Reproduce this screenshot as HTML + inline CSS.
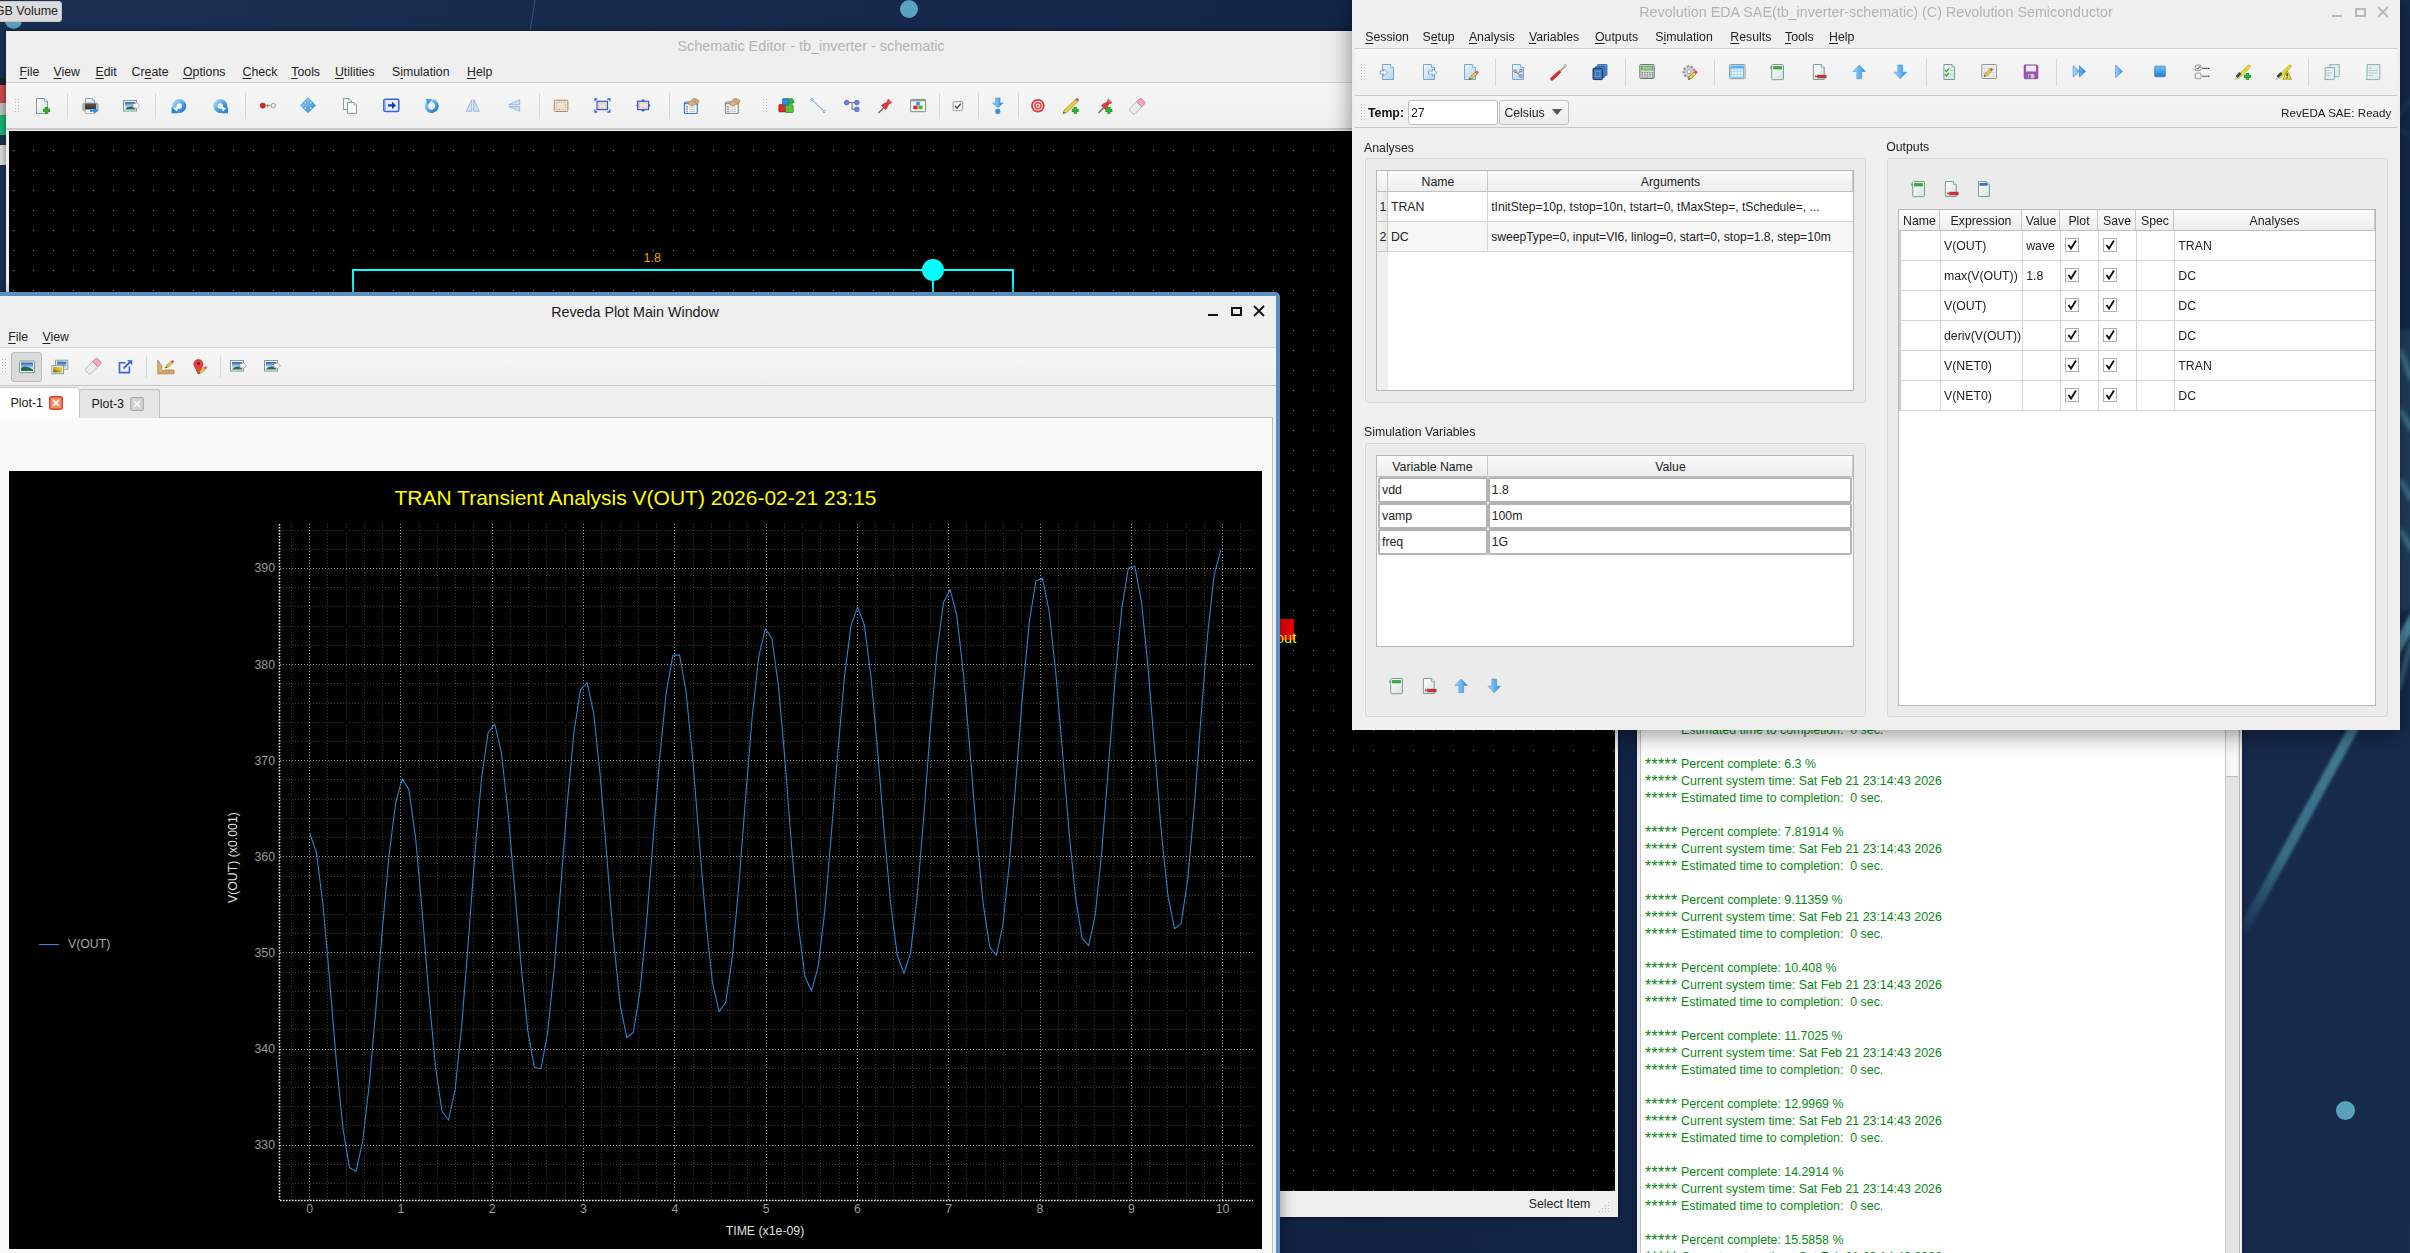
<!DOCTYPE html><html><head><meta charset="utf-8"><style>
html,body{margin:0;padding:0;}
body{width:2410px;height:1253px;overflow:hidden;position:relative;background:#13223d;font-family:"Liberation Sans",sans-serif;}
.a{position:absolute;}
.t{position:absolute;white-space:pre;font-family:"Liberation Sans",sans-serif;}
u{text-decoration:underline;text-underline-offset:2px;text-decoration-thickness:1px;}
</style></head><body><div class="a" style="left:0px;top:0px;width:2410px;height:1253px;background:linear-gradient(100deg,#1b2f52 0%,#15284b 40%,#112243 60%,#182c4e 100%)"></div><svg class="a" style="left:525px;top:0px;" width="12" height="32" viewBox="0 0 12 32"><path d="M10,0 L5,32" stroke="#3a6a8a" stroke-width="1" opacity=".7"/></svg><svg class="a" style="left:2230px;top:560px;" width="180" height="420" viewBox="0 0 180 420"><defs><filter id="bl"><feGaussianBlur stdDeviation="1.8"/></filter><linearGradient id="sg" x1="0" y1="1" x2="0" y2="0"><stop offset="0" stop-color="#3f7d96" stop-opacity="0"/><stop offset=".25" stop-color="#3f7d96" stop-opacity=".8"/><stop offset="1" stop-color="#4a8aa2" stop-opacity="1"/></linearGradient></defs><path d="M8,380 L188,50" stroke="url(#sg)" stroke-width="10" filter="url(#bl)"/></svg><svg class="a" style="left:2380px;top:80px;" width="30" height="640" viewBox="0 0 30 640"><defs><filter id="bl2"><feGaussianBlur stdDeviation="2.2"/></filter></defs><g filter="url(#bl2)" opacity=".75"><path d="M0,60 L30,20" stroke="#4a8aa8" stroke-width="1.2"/><path d="M0,40 L30,55" stroke="#4a8aa8" stroke-width="1"/><rect x="18" y="250" width="14" height="280" fill="#2f6078" opacity=".6"/><path d="M20,270 L32,300 M20,330 L32,350 M20,400 L32,420 M20,450 L32,470" stroke="#5aa8c0" stroke-width="4"/><path d="M32,560 L18,610" stroke="#4a90a8" stroke-width="4"/></g></svg><div class="a" style="left:900px;top:0px;width:18px;height:18px;border-radius:50%;background:#5aa2bb"></div><div class="a" style="left:2336px;top:1101px;width:19px;height:19px;border-radius:50%;background:#5aa2bb"></div><div class="a" style="left:5px;top:12px;width:17px;height:17px;border-radius:50%;background:#5aa2bb"></div><div class="a" style="left:0px;top:78px;width:6px;height:7px;background:#222"></div><div class="a" style="left:0px;top:85px;width:6px;height:18px;background:#c84a4a"></div><div class="a" style="left:0px;top:103px;width:6px;height:12px;background:#bbb"></div><div class="a" style="left:0px;top:115px;width:6px;height:20px;background:#18b070"></div><div class="a" style="left:0px;top:145px;width:6px;height:20px;background:#d8d8d8"></div><div class="a" style="left:6px;top:31px;width:1612px;height:1186px;background:#efefef;box-shadow:0 0 6px rgba(0,0,0,.5)"></div><div class="t" style="left:411.0px;width:800px;text-align:center;top:39.4px;font-size:14.4px;line-height:14.4px;color:#b3b3b3;font-weight:normal;">Schematic Editor - tb_inverter - schematic</div><div class="t" style="left:19.5px;top:65.9px;font-size:12.3px;line-height:12.3px;color:#232323;font-weight:normal;"><u>F</u>ile</div><div class="t" style="left:53.5px;top:65.9px;font-size:12.3px;line-height:12.3px;color:#232323;font-weight:normal;"><u>V</u>iew</div><div class="t" style="left:95.5px;top:65.9px;font-size:12.3px;line-height:12.3px;color:#232323;font-weight:normal;"><u>E</u>dit</div><div class="t" style="left:131.6px;top:65.9px;font-size:12.3px;line-height:12.3px;color:#232323;font-weight:normal;">Cr<u>e</u>ate</div><div class="t" style="left:183.0px;top:65.9px;font-size:12.3px;line-height:12.3px;color:#232323;font-weight:normal;"><u>O</u>ptions</div><div class="t" style="left:242.5px;top:65.9px;font-size:12.3px;line-height:12.3px;color:#232323;font-weight:normal;"><u>C</u>heck</div><div class="t" style="left:291.3px;top:65.9px;font-size:12.3px;line-height:12.3px;color:#232323;font-weight:normal;"><u>T</u>ools</div><div class="t" style="left:334.9px;top:65.9px;font-size:12.3px;line-height:12.3px;color:#232323;font-weight:normal;"><u>U</u>tilities</div><div class="t" style="left:392.1px;top:65.9px;font-size:12.3px;line-height:12.3px;color:#232323;font-weight:normal;">S<u>i</u>mulation</div><div class="t" style="left:467.0px;top:65.9px;font-size:12.3px;line-height:12.3px;color:#232323;font-weight:normal;"><u>H</u>elp</div><div class="a" style="left:6px;top:82px;width:1612px;height:1px;background:#d0d0d0"></div><div class="a" style="left:6px;top:83px;width:1612px;height:46px;background:linear-gradient(#f7f7f7,#efefef)"></div><div class="a" style="left:6px;top:128px;width:1612px;height:2px;background:#c8c8c8"></div><svg class="a" style="left:15px;top:99px;" width="4" height="15" viewBox="0 0 4 15"><rect x="0" y="0" width="1" height="1" fill="#bbb"/><rect x="3" y="0" width="1" height="1" fill="#bbb"/><rect x="0" y="3" width="1" height="1" fill="#bbb"/><rect x="3" y="3" width="1" height="1" fill="#bbb"/><rect x="0" y="6" width="1" height="1" fill="#bbb"/><rect x="3" y="6" width="1" height="1" fill="#bbb"/><rect x="0" y="9" width="1" height="1" fill="#bbb"/><rect x="3" y="9" width="1" height="1" fill="#bbb"/><rect x="0" y="12" width="1" height="1" fill="#bbb"/><rect x="3" y="12" width="1" height="1" fill="#bbb"/></svg><svg class="a" style="left:35px;top:98px;overflow:visible" width="17" height="17" viewBox="0 0 17 17"><defs><linearGradient id="g1" x1="0" y1="0" x2="1" y2="1"><stop offset="0" stop-color="#ffffff"/><stop offset="1" stop-color="#d2e2e2"/></linearGradient></defs><path d="M1.5,0.5 H9.5 L12.5,3.5 V15.5 H1.5 Z" fill="url(#g1)" stroke="#7f9a9a" stroke-width="1" stroke-linejoin="round"/><path d="M9.5,0.5 V3.5 H12.5" fill="#fff" stroke="#7f9a9a" stroke-width=".8"/><path d="M8.21,12.3 H14.989999999999998 M11.6,8.91 V15.690000000000001" stroke="#148a14" stroke-width="3.16" stroke-linecap="butt"/><path d="M8.71,12.3 H14.489999999999998 M11.6,9.41 V15.190000000000001" stroke="#2fb52f" stroke-width="2.16" stroke-linecap="butt"/></svg><svg class="a" style="left:82px;top:98px;overflow:visible" width="17" height="17" viewBox="0 0 17 17"><defs><linearGradient id="g2" x1="0" y1="0" x2="0" y2="1"><stop offset="0" stop-color="#5a5a5a"/><stop offset="1" stop-color="#2a2a2a"/></linearGradient></defs><path d="M3.5,0.5 H10.5 L12.5,2.5 V6.5 H3.5 Z" fill="#eef4f4" stroke="#8aa" stroke-width="1" stroke-linejoin="round"/><path d="M10.5,0.5 V2.5 H12.5" fill="#fff" stroke="#8aa" stroke-width=".8"/><rect x="0.7" y="5" width="15.6" height="8" rx="2" fill="#b8b8b8" stroke="#888" stroke-width=".6"/><rect x="3" y="5.5" width="11" height="6" fill="url(#g2)"/><rect x="3.5" y="11.5" width="9" height="4" fill="#fafafa" stroke="#999" stroke-width=".6"/><path d="M8,12.8 H13.5 M12,10.8 L14.8,12.8 L12,14.8" stroke="#2a8ae8" stroke-width="1.8" fill="none"/></svg><svg class="a" style="left:123px;top:98px;overflow:visible" width="17" height="17" viewBox="0 0 17 17"><defs><linearGradient id="g3" x1="0" y1="0" x2="0" y2="1"><stop offset="0" stop-color="#2a5aa8"/><stop offset="0.5" stop-color="#9ac8f0"/><stop offset="1" stop-color="#eaf4ff"/></linearGradient></defs><rect x="0.5" y="2.5" width="13" height="10.5" fill="#f6f8f8" stroke="#7a9a9a" stroke-width="1"/><rect x="2" y="4" width="10" height="7.5" fill="url(#g3)"/><path d="M2,11.5 Q5,7 12,9.5 V11.5 Z" fill="#2a6a4a"/><path d="M10,5.5 H13 V3.8 L16.3,7.7 L13,11.6 V9.9 H10 Z" fill="#fff" stroke="#889" stroke-width=".7"/></svg><svg class="a" style="left:171px;top:98px;overflow:visible" width="17" height="17" viewBox="0 0 17 17"><defs><linearGradient id="g4" x1="0" y1="0" x2="1" y2="1"><stop offset="0" stop-color="#9ad8fc"/><stop offset="1" stop-color="#1a78d0"/></linearGradient></defs><path d="M3.7,9.7 A4.9,4.9 0 1 1 6.2,12.4" fill="none" stroke="url(#g4)" stroke-width="4.2"/><path d="M0.6,8.8 L7.2,15.3 L0.6,15.3 Z" fill="#1f84d8"/></svg><svg class="a" style="left:212px;top:98px;overflow:visible" width="17" height="17" viewBox="0 0 17 17"><defs><linearGradient id="g5" x1="0" y1="0" x2="1" y2="1"><stop offset="0" stop-color="#9ad8fc"/><stop offset="1" stop-color="#1a78d0"/></linearGradient></defs><path d="M12.9,9.7 A4.9,4.9 0 1 0 10.4,12.4" fill="none" stroke="url(#g5)" stroke-width="4.2"/><path d="M16,8.8 L9.4,15.3 L16,15.3 Z" fill="#1f84d8"/></svg><svg class="a" style="left:260px;top:98px;overflow:visible" width="17" height="17" viewBox="0 0 17 17"><circle cx="2.8" cy="7.6" r="2.6" fill="#d82828" stroke="#a01010" stroke-width=".5"/><path d="M6.2,7.6 L8.4,6.2 V9 Z" fill="#c02020"/><path d="M8.6,7.6 H11" stroke="#999" stroke-width="1"/><circle cx="13.3" cy="7.6" r="2.2" fill="#f4f4f4" stroke="#999" stroke-width="1"/></svg><svg class="a" style="left:300px;top:98px;overflow:visible" width="17" height="17" viewBox="0 0 17 17"><defs><linearGradient id="g6" x1="0" y1="0" x2="1" y2="1"><stop offset="0" stop-color="#a8dcfc"/><stop offset="1" stop-color="#2a8ae0"/></linearGradient></defs><path d="M8,-0.2 L11.6,3.4 H9.4 V5.9 H11.9 V3.7 L15.7,7.3 L11.9,10.9 V8.7 H9.4 V11.2 H11.6 L8,14.7 L4.4,11.2 H6.6 V8.7 H4.1 V10.9 L0.4,7.3 L4.1,3.7 V5.9 H6.6 V3.4 H4.4 Z" fill="url(#g6)" stroke="#2a7ad0" stroke-width=".6"/></svg><svg class="a" style="left:342px;top:98px;overflow:visible" width="17" height="17" viewBox="0 0 17 17"><path d="M1.5,0.5 H7.0 L9.5,3.0 V11.5 H1.5 Z" fill="#f4f6f6" stroke="#8a9a9a" stroke-width="1" stroke-linejoin="round"/><path d="M7.0,0.5 V3.0 H9.5" fill="#fff" stroke="#8a9a9a" stroke-width=".8"/><path d="M5.5,4.5 H12.0 L14.5,7.0 V15.5 H5.5 Z" fill="#f8fafa" stroke="#8a9a9a" stroke-width="1" stroke-linejoin="round"/><path d="M12.0,4.5 V7.0 H14.5" fill="#fff" stroke="#8a9a9a" stroke-width=".8"/></svg><svg class="a" style="left:383px;top:98px;overflow:visible" width="17" height="17" viewBox="0 0 17 17"><rect x="0.8" y="1.3" width="15" height="12.2" rx="1.5" fill="#e6ecfc" stroke="#3a62e0" stroke-width="1.5"/><path d="M2.5,3 V12" stroke="#9ab0f0" stroke-width="1"/><path d="M5,6.2 H9 V3.8 L13,7.4 L9,11 V8.6 H5 Z" fill="#1a3aa8"/></svg><svg class="a" style="left:424px;top:98px;overflow:visible" width="17" height="17" viewBox="0 0 17 17"><defs><linearGradient id="g7" x1="0" y1="0" x2="1" y2="1"><stop offset="0" stop-color="#9ad8fc"/><stop offset="1" stop-color="#1a78d0"/></linearGradient></defs><path d="M4.5,3.8 A5.3,5.3 0 1 0 8.3,2.8" fill="none" stroke="url(#g7)" stroke-width="3.4"/><path d="M2,0.8 L8.5,1.5 L3.5,7 Z" fill="#3a9ae8"/></svg><svg class="a" style="left:465px;top:98px;overflow:visible" width="17" height="17" viewBox="0 0 17 17"><path d="M6.8,1.7 V13.2 H1.3 Z" fill="#cfe0f2" stroke="#96b6d8" stroke-width=".9"/><path d="M8.8,1.7 V13.2 H14.4 Z" fill="#cfe0f2" stroke="#96b6d8" stroke-width=".9"/></svg><svg class="a" style="left:506px;top:98px;overflow:visible" width="17" height="17" viewBox="0 0 17 17"><path d="M13.7,1.7 L2.6,6.8 H13.7 Z" fill="#cfe0f2" stroke="#96b6d8" stroke-width=".9"/><path d="M13.7,13.2 L2.6,8.6 H13.7 Z" fill="#cfe0f2" stroke="#96b6d8" stroke-width=".9"/></svg><svg class="a" style="left:553px;top:98px;overflow:visible" width="17" height="17" viewBox="0 0 17 17"><rect x="1.3" y="2.2" width="13.6" height="11.3" rx="1" fill="#efe4d2" stroke="#a88c6c" stroke-width="1"/><rect x="3.5" y="4.3" width="9.2" height="7.2" fill="none" stroke="#b8a488" stroke-width=".8" stroke-dasharray="1.2,1"/></svg><svg class="a" style="left:594px;top:98px;overflow:visible" width="17" height="17" viewBox="0 0 17 17"><rect x="3" y="3.3" width="10.5" height="8.3" fill="#efe4d2" stroke="#3a5ae0" stroke-width="1.2"/><rect x="4.6" y="4.9" width="7.3" height="5.1" fill="none" stroke="#b8a488" stroke-width=".7" stroke-dasharray="1,1"/><path d="M1,3.3 V1 H3.3 M13.3,1 H15.8 V3.3 M15.8,11.6 V14 H13.3 M3.3,14 H1 V11.6" stroke="#3a5ae0" stroke-width="1.3" fill="none"/></svg><svg class="a" style="left:635px;top:98px;overflow:visible" width="17" height="17" viewBox="0 0 17 17"><rect x="2.6" y="3.3" width="11" height="8.3" fill="#efe4d2" stroke="#3a5ae0" stroke-width="1.2"/><rect x="4.3" y="4.9" width="7.7" height="5.1" fill="none" stroke="#b8a488" stroke-width=".7" stroke-dasharray="1,1"/><path d="M1.1,7.4 L3.2,5.4 V9.4 Z M15.6,7.4 L13.5,5.4 V9.4 Z M8,0.9 L6,2.9 H10 Z M8,14 L6,12 H10 Z" fill="#3a5ae0"/></svg><svg class="a" style="left:683px;top:98px;overflow:visible" width="17" height="17" viewBox="0 0 17 17"><rect x="1.5" y="4" width="12.8" height="11.5" rx="1" fill="#fafcfc" stroke="#3a7ad8" stroke-width="1.2"/><path d="M1.5,5.5 H14.3" stroke="#3a7ad8" stroke-width="1.5"/><rect x="3.3" y="8.2" width="1.4" height="1.4" fill="#2aa02a"/><rect x="3.3" y="10.6" width="1.4" height="1.4" fill="#d03030"/><rect x="3.3" y="13" width="1.4" height="1.4" fill="#3a6ae0"/><path d="M6,9 H12 M6,11.3 H12 M6,13.7 H12" stroke="#b8c0c0" stroke-width=".9"/><path d="M5,5.5 L9,1.5 Q11,0 13,0.8 L16,2.5 L15,5.5 L12.5,6.2 L9,8 Z" fill="#d8b080" stroke="#a07040" stroke-width=".6"/><path d="M9.5,3 L13.5,5 M10.5,1.8 L14.5,3.8" stroke="#b08050" stroke-width=".6"/></svg><svg class="a" style="left:724px;top:98px;overflow:visible" width="17" height="17" viewBox="0 0 17 17"><rect x="1.5" y="4" width="12.8" height="11.5" rx="1" fill="#fafcfc" stroke="#8a9090" stroke-width="1.2"/><path d="M1.5,5.5 H14.3" stroke="#8a9090" stroke-width="1.5"/><rect x="3.3" y="8.2" width="1.4" height="1.4" fill="#2aa02a"/><rect x="3.3" y="10.6" width="1.4" height="1.4" fill="#d03030"/><rect x="3.3" y="13" width="1.4" height="1.4" fill="#3a6ae0"/><path d="M6,9 H12 M6,11.3 H12 M6,13.7 H12" stroke="#b8c0c0" stroke-width=".9"/><path d="M5,5.5 L9,1.5 Q11,0 13,0.8 L16,2.5 L15,5.5 L12.5,6.2 L9,8 Z" fill="#d8b080" stroke="#a07040" stroke-width=".6"/><path d="M9.5,3 L13.5,5 M10.5,1.8 L14.5,3.8" stroke="#b08050" stroke-width=".6"/></svg><svg class="a" style="left:778px;top:98px;overflow:visible" width="17" height="17" viewBox="0 0 17 17"><rect x="0.9" y="6.6" width="8.3" height="7.3" rx=".8" fill="#e02828" stroke="#a01010" stroke-width=".7"/><rect x="4.6" y="0.6" width="6.6" height="6.6" rx=".8" fill="#2a8ae8" stroke="#1a5aa8" stroke-width=".7"/><rect x="7.6" y="7.2" width="7.6" height="7.3" rx=".8" fill="#58c038" stroke="#2a8a1a" stroke-width=".7"/><path d="M9.78,3.4 H16.22 M13,0.17999999999999972 V6.62" stroke="#148a14" stroke-width="3.07" stroke-linecap="butt"/><path d="M10.28,3.4 H15.72 M13,0.6799999999999997 V6.12" stroke="#2fb52f" stroke-width="2.07" stroke-linecap="butt"/></svg><svg class="a" style="left:810px;top:98px;overflow:visible" width="17" height="17" viewBox="0 0 17 17"><path d="M2.6,2.4 L13.4,12.6" stroke="#6a98d0" stroke-width="1"/><circle cx="1.9" cy="1.7" r="1.2" fill="#fff" stroke="#6a98d0" stroke-width=".9"/><circle cx="14.2" cy="13.4" r="1.2" fill="#fff" stroke="#6a98d0" stroke-width=".9"/></svg><svg class="a" style="left:844px;top:98px;overflow:visible" width="17" height="17" viewBox="0 0 17 17"><path d="M2.7,4.6 H12.9 M8,4.6 V11.4 H12.9" stroke="#777" stroke-width="1" fill="none"/><circle cx="2.7" cy="4.6" r="2.3" fill="#6a84ea" stroke="#3a52c0" stroke-width=".7"/><circle cx="12.9" cy="4.6" r="2.3" fill="#6a84ea" stroke="#3a52c0" stroke-width=".7"/><circle cx="12.9" cy="11.4" r="2.3" fill="#6a84ea" stroke="#3a52c0" stroke-width=".7"/></svg><svg class="a" style="left:877px;top:98px;overflow:visible" width="17" height="17" viewBox="0 0 17 17"><path d="M1.5,15 L6.5,10" stroke="#666" stroke-width="1.4"/><path d="M4.5,7.5 L8.5,11.5 L10.5,8.8 L11.5,6.2 L13.8,4.8 L11.2,2.2 L9.8,4.5 L7.2,5.5 Z" fill="#e03838" stroke="#a02020" stroke-width=".6"/><path d="M10.6,1.6 L14.4,5.4" stroke="#e85050" stroke-width="2.2"/></svg><svg class="a" style="left:910px;top:98px;overflow:visible" width="17" height="17" viewBox="0 0 17 17"><rect x="0.6" y="1.4" width="15" height="12.3" rx=".8" fill="#f4f4f4" stroke="#888" stroke-width="1"/><path d="M0.6,2.6 H15.6" stroke="#999" stroke-width="1.4"/><rect x="6.2" y="3.8" width="3.6" height="3.6" fill="#2a9ae8"/><rect x="3.4" y="7.6" width="4.2" height="3.6" fill="#e02828"/><rect x="8.4" y="7.6" width="4.2" height="3.6" fill="#48b838"/></svg><svg class="a" style="left:950px;top:98px;overflow:visible" width="17" height="17" viewBox="0 0 17 17"><rect x="3.1" y="3.6" width="9.6" height="9.1" rx="1.2" fill="#fafafa" stroke="#999" stroke-width="1"/><path d="M5,8 L7,10.2 L10.8,5.6" stroke="#444" stroke-width="1.4" fill="none"/></svg><svg class="a" style="left:990px;top:98px;overflow:visible" width="17" height="17" viewBox="0 0 17 17"><defs><linearGradient id="g8" x1="0" y1="0" x2="1" y2="0"><stop offset="0" stop-color="#a8dcfc"/><stop offset="1" stop-color="#2a8ae0"/></linearGradient></defs><path d="M5.6,0 H10.1 V5 H13.3 L7.85,9.7 L2.3,5 H5.6 Z" fill="url(#g8)" stroke="#3a8ad8" stroke-width=".5"/><circle cx="7.8" cy="13.4" r="2.4" fill="#2a9ae8" stroke="#1a6ac0" stroke-width=".5"/></svg><svg class="a" style="left:1030px;top:98px;overflow:visible" width="17" height="17" viewBox="0 0 17 17"><circle cx="7.9" cy="7.8" r="6.8" fill="#e03838"/><circle cx="7.9" cy="7.8" r="5" fill="#fbe0e0"/><circle cx="7.9" cy="7.8" r="3.8" fill="#e84848"/><circle cx="7.9" cy="7.8" r="2.3" fill="#fbe8e8"/><circle cx="7.9" cy="7.8" r="1.1" fill="#e03838"/></svg><svg class="a" style="left:1063px;top:98px;overflow:visible" width="17" height="17" viewBox="0 0 17 17"><path d="M0.20,15.50 L3.54,14.64 L14.68,3.86 L12.32,1.42 L1.18,12.19 Z" fill="#e8cc3a" stroke="#8a7a30" stroke-width=".6"/><path d="M14.68,3.86 L16.48,2.12 L14.12,-0.32 L12.32,1.42 Z" fill="#e05060"/><path d="M0.20,15.50 L2.00,15.06 L0.70,13.72 Z" fill="#222"/><path d="M8.809999999999999,12.4 H15.59 M12.2,9.010000000000002 V15.79" stroke="#148a14" stroke-width="3.16" stroke-linecap="butt"/><path d="M9.309999999999999,12.4 H15.09 M12.2,9.510000000000002 V15.29" stroke="#2fb52f" stroke-width="2.16" stroke-linecap="butt"/></svg><svg class="a" style="left:1097px;top:98px;overflow:visible" width="17" height="17" viewBox="0 0 17 17"><path d="M1.5,15 L6.5,10" stroke="#666" stroke-width="1.4"/><path d="M4.5,7.5 L8.5,11.5 L10.5,8.8 L11.5,6.2 L13.8,4.8 L11.2,2.2 L9.8,4.5 L7.2,5.5 Z" fill="#e03838" stroke="#a02020" stroke-width=".6"/><path d="M10.6,1.6 L14.4,5.4" stroke="#e85050" stroke-width="2.2"/><path d="M8.510000000000002,12.4 H15.29 M11.9,9.010000000000002 V15.79" stroke="#148a14" stroke-width="3.16" stroke-linecap="butt"/><path d="M9.010000000000002,12.4 H14.79 M11.9,9.510000000000002 V15.29" stroke="#2fb52f" stroke-width="2.16" stroke-linecap="butt"/></svg><svg class="a" style="left:1129px;top:98px;overflow:visible" width="17" height="17" viewBox="0 0 17 17"><path d="M0.8,10.6 L7.6,3.6 L12.8,8.8 L6,15.6 Q4.8,16.4 3.6,15.6 L0.8,12.8 Q0,11.6 0.8,10.6 Z" fill="#ececec" stroke="#a8a8a8" stroke-width=".8"/><path d="M7.6,3.6 L10.6,0.8 Q11.6,0 12.6,0.8 L15.6,3.8 Q16.4,4.8 15.6,5.8 L12.8,8.8 Z" fill="#f2a4ba" stroke="#c07a90" stroke-width=".8"/></svg><div class="a" style="left:67px;top:93px;width:1px;height:26px;background:#d8d8d8"></div><div class="a" style="left:155px;top:93px;width:1px;height:26px;background:#d8d8d8"></div><div class="a" style="left:245px;top:93px;width:1px;height:26px;background:#d8d8d8"></div><div class="a" style="left:539px;top:93px;width:1px;height:26px;background:#d8d8d8"></div><div class="a" style="left:669px;top:93px;width:1px;height:26px;background:#d8d8d8"></div><div class="a" style="left:939px;top:93px;width:1px;height:26px;background:#d8d8d8"></div><div class="a" style="left:978px;top:93px;width:1px;height:26px;background:#d8d8d8"></div><div class="a" style="left:1018px;top:93px;width:1px;height:26px;background:#d8d8d8"></div><svg class="a" style="left:763px;top:99px;" width="4" height="15" viewBox="0 0 4 15"><rect x="0" y="0" width="1" height="1" fill="#bbb"/><rect x="3" y="0" width="1" height="1" fill="#bbb"/><rect x="0" y="3" width="1" height="1" fill="#bbb"/><rect x="3" y="3" width="1" height="1" fill="#bbb"/><rect x="0" y="6" width="1" height="1" fill="#bbb"/><rect x="3" y="6" width="1" height="1" fill="#bbb"/><rect x="0" y="9" width="1" height="1" fill="#bbb"/><rect x="3" y="9" width="1" height="1" fill="#bbb"/><rect x="0" y="12" width="1" height="1" fill="#bbb"/><rect x="3" y="12" width="1" height="1" fill="#bbb"/></svg><div class="a" style="left:9px;top:131px;width:1606px;height:1060px;background-color:#000;background-image:radial-gradient(circle at 0.5px 0.5px,#8a8a8a 0.7px,transparent 0.8px);background-size:20px 20px;background-position:4px 19px"></div><div class="a" style="left:352px;top:269px;width:662px;height:2px;background:#00ffff"></div><div class="a" style="left:352px;top:269px;width:2px;height:30px;background:#00ffff"></div><div class="a" style="left:1012px;top:269px;width:2px;height:30px;background:#00ffff"></div><div class="a" style="left:932px;top:270px;width:2px;height:30px;background:#00ffff"></div><div class="a" style="left:922px;top:259px;width:22px;height:22px;border-radius:50%;background:#00ffff"></div><div class="t" style="left:643.5px;top:252.4px;font-size:12.5px;line-height:12.5px;color:#f0a000;font-weight:normal;">1.8</div><div class="a" style="left:1280px;top:619px;width:14px;height:21px;background:#e80000"></div><div class="t" style="left:1276.0px;top:631.2px;font-size:14.5px;line-height:14.5px;color:#ffff00;font-weight:normal;">out</div><div class="a" style="left:6px;top:1191px;width:1612px;height:26px;background:#efefef"></div><div class="t" style="left:1390.3px;width:200px;text-align:right;top:1198.0px;font-size:12.3px;line-height:12.3px;color:#222;font-weight:normal;">Select Item</div><svg class="a" style="left:1598px;top:1202px;" width="14" height="12" viewBox="0 0 14 12"><rect x="10" y="0" width="1" height="1" fill="#bbb"/><rect x="7" y="3" width="1" height="1" fill="#bbb"/><rect x="10" y="3" width="1" height="1" fill="#bbb"/><rect x="4" y="6" width="1" height="1" fill="#bbb"/><rect x="7" y="6" width="1" height="1" fill="#bbb"/><rect x="10" y="6" width="1" height="1" fill="#bbb"/><rect x="1" y="9" width="1" height="1" fill="#bbb"/><rect x="4" y="9" width="1" height="1" fill="#bbb"/><rect x="7" y="9" width="1" height="1" fill="#bbb"/><rect x="10" y="9" width="1" height="1" fill="#bbb"/></svg><div class="a" style="left:1637px;top:600px;width:605px;height:653px;background:#f0f0f0;box-shadow:0 0 5px rgba(0,0,0,.4)"></div><div class="a" style="left:1641px;top:600px;width:584px;height:653px;background:#fff"></div><div class="a" style="left:2225px;top:600px;width:14px;height:653px;background:#e4e4e4;border-left:1px solid #c8c8c8;box-sizing:border-box"></div><div class="a" style="left:2239px;top:600px;width:1px;height:653px;background:#b8b8b8"></div><div class="a" style="left:1640px;top:600px;width:1px;height:653px;background:#c4c4c4"></div><div class="a" style="left:2226px;top:700px;width:12px;height:77px;background:linear-gradient(90deg,#f4f4f4,#fafafa);border-bottom:1px solid #c0c0c0;box-sizing:border-box"></div><div class="t" style="left:1645px;top:620.2px;font-size:12.38px;line-height:17px;color:#088a12"><span style="font-size:16px;line-height:0;letter-spacing:0.3px;position:relative;top:2px">*****</span> Percent complete: 3.7111 %
<span style="font-size:16px;line-height:0;letter-spacing:0.3px;position:relative;top:2px">*****</span> Current system time: Sat Feb 21 23:14:43 2026
<span style="font-size:16px;line-height:0;letter-spacing:0.3px;position:relative;top:2px">*****</span> Estimated time to completion:  0 sec.

<span style="font-size:16px;line-height:0;letter-spacing:0.3px;position:relative;top:2px">*****</span> Percent complete: 5.00555 %
<span style="font-size:16px;line-height:0;letter-spacing:0.3px;position:relative;top:2px">*****</span> Current system time: Sat Feb 21 23:14:43 2026
<span style="font-size:16px;line-height:0;letter-spacing:0.3px;position:relative;top:2px">*****</span> Estimated time to completion:  0 sec.

<span style="font-size:16px;line-height:0;letter-spacing:0.3px;position:relative;top:2px">*****</span> Percent complete: 6.3 %
<span style="font-size:16px;line-height:0;letter-spacing:0.3px;position:relative;top:2px">*****</span> Current system time: Sat Feb 21 23:14:43 2026
<span style="font-size:16px;line-height:0;letter-spacing:0.3px;position:relative;top:2px">*****</span> Estimated time to completion:  0 sec.

<span style="font-size:16px;line-height:0;letter-spacing:0.3px;position:relative;top:2px">*****</span> Percent complete: 7.81914 %
<span style="font-size:16px;line-height:0;letter-spacing:0.3px;position:relative;top:2px">*****</span> Current system time: Sat Feb 21 23:14:43 2026
<span style="font-size:16px;line-height:0;letter-spacing:0.3px;position:relative;top:2px">*****</span> Estimated time to completion:  0 sec.

<span style="font-size:16px;line-height:0;letter-spacing:0.3px;position:relative;top:2px">*****</span> Percent complete: 9.11359 %
<span style="font-size:16px;line-height:0;letter-spacing:0.3px;position:relative;top:2px">*****</span> Current system time: Sat Feb 21 23:14:43 2026
<span style="font-size:16px;line-height:0;letter-spacing:0.3px;position:relative;top:2px">*****</span> Estimated time to completion:  0 sec.

<span style="font-size:16px;line-height:0;letter-spacing:0.3px;position:relative;top:2px">*****</span> Percent complete: 10.408 %
<span style="font-size:16px;line-height:0;letter-spacing:0.3px;position:relative;top:2px">*****</span> Current system time: Sat Feb 21 23:14:43 2026
<span style="font-size:16px;line-height:0;letter-spacing:0.3px;position:relative;top:2px">*****</span> Estimated time to completion:  0 sec.

<span style="font-size:16px;line-height:0;letter-spacing:0.3px;position:relative;top:2px">*****</span> Percent complete: 11.7025 %
<span style="font-size:16px;line-height:0;letter-spacing:0.3px;position:relative;top:2px">*****</span> Current system time: Sat Feb 21 23:14:43 2026
<span style="font-size:16px;line-height:0;letter-spacing:0.3px;position:relative;top:2px">*****</span> Estimated time to completion:  0 sec.

<span style="font-size:16px;line-height:0;letter-spacing:0.3px;position:relative;top:2px">*****</span> Percent complete: 12.9969 %
<span style="font-size:16px;line-height:0;letter-spacing:0.3px;position:relative;top:2px">*****</span> Current system time: Sat Feb 21 23:14:43 2026
<span style="font-size:16px;line-height:0;letter-spacing:0.3px;position:relative;top:2px">*****</span> Estimated time to completion:  0 sec.

<span style="font-size:16px;line-height:0;letter-spacing:0.3px;position:relative;top:2px">*****</span> Percent complete: 14.2914 %
<span style="font-size:16px;line-height:0;letter-spacing:0.3px;position:relative;top:2px">*****</span> Current system time: Sat Feb 21 23:14:43 2026
<span style="font-size:16px;line-height:0;letter-spacing:0.3px;position:relative;top:2px">*****</span> Estimated time to completion:  0 sec.

<span style="font-size:16px;line-height:0;letter-spacing:0.3px;position:relative;top:2px">*****</span> Percent complete: 15.5858 %
<span style="font-size:16px;line-height:0;letter-spacing:0.3px;position:relative;top:2px">*****</span> Current system time: Sat Feb 21 23:14:43 2026
<span style="font-size:16px;line-height:0;letter-spacing:0.3px;position:relative;top:2px">*****</span> Estimated time to completion:  0 sec.

<span style="font-size:16px;line-height:0;letter-spacing:0.3px;position:relative;top:2px">*****</span> Percent complete: 16.8803 %
<span style="font-size:16px;line-height:0;letter-spacing:0.3px;position:relative;top:2px">*****</span> Current system time: Sat Feb 21 23:14:43 2026
<span style="font-size:16px;line-height:0;letter-spacing:0.3px;position:relative;top:2px">*****</span> Estimated time to completion:  0 sec.
</div><div class="a" style="left:-4px;top:292px;width:1284px;height:971px;background:#5a8fc0;border-radius:5px 5px 0 0;box-shadow:2px 0 14px rgba(0,0,0,.35)"></div><div class="a" style="left:0px;top:296px;width:1276px;height:961px;background:#efefef"></div><div class="t" style="left:235.0px;width:800px;text-align:center;top:304.6px;font-size:14.3px;line-height:14.3px;color:#1a1a1a;font-weight:normal;">Reveda Plot Main Window</div><div class="a" style="left:1208px;top:314px;width:10px;height:2px;background:#111"></div><div class="a" style="left:1231px;top:307px;width:11px;height:9px;border:2px solid #111;box-sizing:border-box;border-top-width:2px"></div><svg class="a" style="left:1253px;top:305px;" width="12" height="12" viewBox="0 0 12 12"><path d="M1,1 L11,11 M11,1 L1,11" stroke="#111" stroke-width="1.8"/></svg><div class="t" style="left:8.2px;top:331.3px;font-size:12.3px;line-height:12.3px;color:#222;font-weight:normal;"><u>F</u>ile</div><div class="t" style="left:42.5px;top:331.3px;font-size:12.3px;line-height:12.3px;color:#222;font-weight:normal;"><u>V</u>iew</div><div class="a" style="left:0px;top:347px;width:1276px;height:1px;background:#d4d4d4"></div><div class="a" style="left:0px;top:348px;width:1276px;height:37px;background:linear-gradient(#f7f7f7,#efefef)"></div><div class="a" style="left:0px;top:385px;width:1276px;height:1px;background:#c4c4c4"></div><svg class="a" style="left:2px;top:359px;" width="4" height="15" viewBox="0 0 4 15"><rect x="0" y="0" width="1" height="1" fill="#bbb"/><rect x="3" y="0" width="1" height="1" fill="#bbb"/><rect x="0" y="3" width="1" height="1" fill="#bbb"/><rect x="3" y="3" width="1" height="1" fill="#bbb"/><rect x="0" y="6" width="1" height="1" fill="#bbb"/><rect x="3" y="6" width="1" height="1" fill="#bbb"/><rect x="0" y="9" width="1" height="1" fill="#bbb"/><rect x="3" y="9" width="1" height="1" fill="#bbb"/><rect x="0" y="12" width="1" height="1" fill="#bbb"/><rect x="3" y="12" width="1" height="1" fill="#bbb"/></svg><div class="a" style="left:11px;top:352px;width:31px;height:30px;background:#dadada;border:1px solid #bcbcbc;border-radius:3px;box-sizing:border-box"></div><svg class="a" style="left:19px;top:358px;overflow:visible" width="17" height="17" viewBox="0 0 17 17"><defs><linearGradient id="g9" x1="0" y1="0" x2="0" y2="1"><stop offset="0" stop-color="#2a5aa8"/><stop offset="0.55" stop-color="#9ad0f8"/><stop offset="1" stop-color="#f0f8ff"/></linearGradient></defs><rect x="0.5" y="3" width="15" height="11.6" rx=".5" fill="#f4f6f6" stroke="#7a9a9a" stroke-width="1"/><rect x="2" y="4.5" width="12" height="8.6" fill="url(#g9)"/><path d="M2,13.1 V10 Q6,6.5 14,11.5 V13.1 Z" fill="#2a6a4a"/></svg><svg class="a" style="left:52px;top:358px;overflow:visible" width="17" height="17" viewBox="0 0 17 17"><defs><linearGradient id="g10" x1="0" y1="0" x2="0" y2="1"><stop offset="0" stop-color="#2a5aa8"/><stop offset="1" stop-color="#cfe8ff"/></linearGradient></defs><defs><linearGradient id="g11" x1="0" y1="1" x2="1" y2="0"><stop offset="0" stop-color="#604010"/><stop offset="0.5" stop-color="#d8b020"/><stop offset="1" stop-color="#f8e060"/></linearGradient></defs><rect x="3.6" y="2.2" width="12.2" height="9" fill="#f4f6f6" stroke="#7a9a9a" stroke-width=".9"/><rect x="5" y="3.6" width="9.4" height="6.2" fill="url(#g10)"/><rect x="-0.1" y="7.7" width="11.6" height="8.1" fill="#f4f6f6" stroke="#7a9a9a" stroke-width=".9"/><rect x="1.2" y="9" width="9" height="5.5" fill="url(#g11)"/></svg><svg class="a" style="left:85px;top:358px;overflow:visible" width="17" height="17" viewBox="0 0 17 17"><path d="M0.8,10.6 L7.6,3.6 L12.8,8.8 L6,15.6 Q4.8,16.4 3.6,15.6 L0.8,12.8 Q0,11.6 0.8,10.6 Z" fill="#ececec" stroke="#a8a8a8" stroke-width=".8"/><path d="M7.6,3.6 L10.6,0.8 Q11.6,0 12.6,0.8 L15.6,3.8 Q16.4,4.8 15.6,5.8 L12.8,8.8 Z" fill="#f2a4ba" stroke="#c07a90" stroke-width=".8"/></svg><svg class="a" style="left:118px;top:358px;overflow:visible" width="17" height="17" viewBox="0 0 17 17"><path d="M7.5,4.8 H1.5 V14.6 H11.4 V8.5" fill="none" stroke="#3a62e0" stroke-width="1.6"/><path d="M5.5,10.5 L13,3" stroke="#3a62e0" stroke-width="1.8"/><path d="M9.2,2.2 H14.2 V7.2 Z" fill="#3a62e0"/></svg><svg class="a" style="left:158px;top:358px;overflow:visible" width="17" height="17" viewBox="0 0 17 17"><path d="M-0.2,2.2 L-0.2,15.8 H15.9 V12 H4 L4,8.5 Z" fill="#e0b070" stroke="#a06a30" stroke-width=".7"/><path d="M4,12 L4,8.5 L7.5,12 Z" fill="#f6f0e4"/><path d="M2,14.5 V13.5 M5,14.5 V13 M8,14.5 V13.5 M11,14.5 V13 M14,14.5 V13.5" stroke="#8a5a20" stroke-width=".6"/><path d="M7.40,10.00 L10.43,8.88 L14.45,5.27 L12.84,3.48 L8.83,7.10 Z" fill="#e8cc3a" stroke="#8a7a30" stroke-width=".6"/><path d="M14.45,5.27 L16.30,3.59 L14.70,1.81 L12.84,3.48 Z" fill="#e05060"/><path d="M7.40,10.00 L9.03,9.42 L8.15,8.44 Z" fill="#222"/></svg><svg class="a" style="left:192px;top:358px;overflow:visible" width="17" height="17" viewBox="0 0 17 17"><path d="M6.3,15.8 L2.2,8 A4.6,4.6 0 1 1 10.6,8 Z" fill="#e84040" stroke="#b02020" stroke-width=".6"/><circle cx="6.3" cy="5.4" r="1.5" fill="#5a2020"/><path d="M6.50,15.80 L9.55,14.75 L13.49,11.34 L11.92,9.53 L7.99,12.93 Z" fill="#e8cc3a" stroke="#8a7a30" stroke-width=".6"/><path d="M13.49,11.34 L15.38,9.71 L13.82,7.89 L11.92,9.53 Z" fill="#e05060"/><path d="M6.50,15.80 L8.14,15.25 L7.28,14.25 Z" fill="#222"/></svg><svg class="a" style="left:230px;top:358px;overflow:visible" width="17" height="17" viewBox="0 0 17 17"><defs><linearGradient id="g12" x1="0" y1="0" x2="0" y2="1"><stop offset="0" stop-color="#2a5aa8"/><stop offset="0.5" stop-color="#9ac8f0"/><stop offset="1" stop-color="#eaf4ff"/></linearGradient></defs><rect x="0.5" y="2.5" width="13" height="10.5" fill="#f6f8f8" stroke="#7a9a9a" stroke-width="1"/><rect x="2" y="4" width="10" height="7.5" fill="url(#g12)"/><path d="M2,11.5 Q5,7 12,9.5 V11.5 Z" fill="#2a6a4a"/><path d="M10,5.5 H13 V3.8 L16.3,7.7 L13,11.6 V9.9 H10 Z" fill="#fff" stroke="#889" stroke-width=".7"/></svg><svg class="a" style="left:264px;top:358px;overflow:visible" width="17" height="17" viewBox="0 0 17 17"><defs><linearGradient id="g13" x1="0" y1="0" x2="0" y2="1"><stop offset="0" stop-color="#2a5aa8"/><stop offset="0.5" stop-color="#9ac8f0"/><stop offset="1" stop-color="#eaf4ff"/></linearGradient></defs><rect x="0.5" y="2.5" width="13" height="10.5" fill="#f6f8f8" stroke="#7a9a9a" stroke-width="1"/><rect x="2" y="4" width="10" height="7.5" fill="url(#g13)"/><path d="M2,11.5 Q5,7 12,9.5 V11.5 Z" fill="#2a6a4a"/><path d="M10,5.5 H13 V3.8 L16.3,7.7 L13,11.6 V9.9 H10 Z" fill="#fff" stroke="#889" stroke-width=".7"/></svg><div class="a" style="left:146px;top:356px;width:1px;height:22px;background:#d8d8d8"></div><div class="a" style="left:220px;top:356px;width:1px;height:22px;background:#d8d8d8"></div><div class="a" style="left:0px;top:386px;width:1276px;height:867px;background:#efefef"></div><div class="a" style="left:0px;top:417px;width:1273px;height:840px;background:#fafafa;border-top:1px solid #bdbdbd;border-right:1px solid #bdbdbd;box-sizing:border-box"></div><div class="a" style="left:79px;top:389px;width:81px;height:29px;background:#e6e6e6;border:1px solid #c0c0c0;border-bottom:none;border-radius:3px 3px 0 0;box-sizing:border-box"></div><div class="a" style="left:0px;top:387px;width:80px;height:31px;background:#fff;border-top:1px solid #c8c8c8;border-right:1px solid #c8c8c8;border-radius:0 4px 0 0;box-sizing:border-box"></div><div class="t" style="left:10.4px;top:397.3px;font-size:12.5px;line-height:12.5px;color:#1a1a1a;font-weight:normal;">Plot-1</div><svg class="a" style="left:49px;top:396px;" width="14" height="14" viewBox="0 0 14 14"><rect x=".75" y=".75" width="12.5" height="12.5" rx="1.5" fill="#ef9060" stroke="#e04030" stroke-width="1.5"/><path d="M4,4 L10,10 M10,4 L4,10" stroke="#fff" stroke-width="1.6"/></svg><div class="t" style="left:91.4px;top:398.3px;font-size:12.5px;line-height:12.5px;color:#1a1a1a;font-weight:normal;">Plot-3</div><svg class="a" style="left:130px;top:397px;" width="14" height="14" viewBox="0 0 14 14"><rect x=".5" y=".5" width="13" height="13" rx="1.5" fill="#cfcfcf" stroke="#aaa" stroke-width="1"/><path d="M4,4 L10,10 M10,4 L4,10" stroke="#fff" stroke-width="1.6"/></svg><div class="a" style="left:9px;top:471px;width:1253px;height:778px;background:#000"></div><svg class="a" style="left:0px;top:0px;" width="1262" height="1253" viewBox="0 0 1262 1253"><line x1="291.5" y1="524" x2="291.5" y2="1200" stroke="#3c3c3c" stroke-width="1" stroke-dasharray="1,2"/><line x1="327.5" y1="524" x2="327.5" y2="1200" stroke="#3c3c3c" stroke-width="1" stroke-dasharray="1,2"/><line x1="346.5" y1="524" x2="346.5" y2="1200" stroke="#3c3c3c" stroke-width="1" stroke-dasharray="1,2"/><line x1="364.5" y1="524" x2="364.5" y2="1200" stroke="#3c3c3c" stroke-width="1" stroke-dasharray="1,2"/><line x1="382.5" y1="524" x2="382.5" y2="1200" stroke="#3c3c3c" stroke-width="1" stroke-dasharray="1,2"/><line x1="419.5" y1="524" x2="419.5" y2="1200" stroke="#3c3c3c" stroke-width="1" stroke-dasharray="1,2"/><line x1="437.5" y1="524" x2="437.5" y2="1200" stroke="#3c3c3c" stroke-width="1" stroke-dasharray="1,2"/><line x1="455.5" y1="524" x2="455.5" y2="1200" stroke="#3c3c3c" stroke-width="1" stroke-dasharray="1,2"/><line x1="473.5" y1="524" x2="473.5" y2="1200" stroke="#3c3c3c" stroke-width="1" stroke-dasharray="1,2"/><line x1="510.5" y1="524" x2="510.5" y2="1200" stroke="#3c3c3c" stroke-width="1" stroke-dasharray="1,2"/><line x1="528.5" y1="524" x2="528.5" y2="1200" stroke="#3c3c3c" stroke-width="1" stroke-dasharray="1,2"/><line x1="546.5" y1="524" x2="546.5" y2="1200" stroke="#3c3c3c" stroke-width="1" stroke-dasharray="1,2"/><line x1="565.5" y1="524" x2="565.5" y2="1200" stroke="#3c3c3c" stroke-width="1" stroke-dasharray="1,2"/><line x1="601.5" y1="524" x2="601.5" y2="1200" stroke="#3c3c3c" stroke-width="1" stroke-dasharray="1,2"/><line x1="620.5" y1="524" x2="620.5" y2="1200" stroke="#3c3c3c" stroke-width="1" stroke-dasharray="1,2"/><line x1="638.5" y1="524" x2="638.5" y2="1200" stroke="#3c3c3c" stroke-width="1" stroke-dasharray="1,2"/><line x1="656.5" y1="524" x2="656.5" y2="1200" stroke="#3c3c3c" stroke-width="1" stroke-dasharray="1,2"/><line x1="693.5" y1="524" x2="693.5" y2="1200" stroke="#3c3c3c" stroke-width="1" stroke-dasharray="1,2"/><line x1="711.5" y1="524" x2="711.5" y2="1200" stroke="#3c3c3c" stroke-width="1" stroke-dasharray="1,2"/><line x1="729.5" y1="524" x2="729.5" y2="1200" stroke="#3c3c3c" stroke-width="1" stroke-dasharray="1,2"/><line x1="747.5" y1="524" x2="747.5" y2="1200" stroke="#3c3c3c" stroke-width="1" stroke-dasharray="1,2"/><line x1="784.5" y1="524" x2="784.5" y2="1200" stroke="#3c3c3c" stroke-width="1" stroke-dasharray="1,2"/><line x1="802.5" y1="524" x2="802.5" y2="1200" stroke="#3c3c3c" stroke-width="1" stroke-dasharray="1,2"/><line x1="820.5" y1="524" x2="820.5" y2="1200" stroke="#3c3c3c" stroke-width="1" stroke-dasharray="1,2"/><line x1="839.5" y1="524" x2="839.5" y2="1200" stroke="#3c3c3c" stroke-width="1" stroke-dasharray="1,2"/><line x1="875.5" y1="524" x2="875.5" y2="1200" stroke="#3c3c3c" stroke-width="1" stroke-dasharray="1,2"/><line x1="893.5" y1="524" x2="893.5" y2="1200" stroke="#3c3c3c" stroke-width="1" stroke-dasharray="1,2"/><line x1="912.5" y1="524" x2="912.5" y2="1200" stroke="#3c3c3c" stroke-width="1" stroke-dasharray="1,2"/><line x1="930.5" y1="524" x2="930.5" y2="1200" stroke="#3c3c3c" stroke-width="1" stroke-dasharray="1,2"/><line x1="966.5" y1="524" x2="966.5" y2="1200" stroke="#3c3c3c" stroke-width="1" stroke-dasharray="1,2"/><line x1="985.5" y1="524" x2="985.5" y2="1200" stroke="#3c3c3c" stroke-width="1" stroke-dasharray="1,2"/><line x1="1003.5" y1="524" x2="1003.5" y2="1200" stroke="#3c3c3c" stroke-width="1" stroke-dasharray="1,2"/><line x1="1021.5" y1="524" x2="1021.5" y2="1200" stroke="#3c3c3c" stroke-width="1" stroke-dasharray="1,2"/><line x1="1058.5" y1="524" x2="1058.5" y2="1200" stroke="#3c3c3c" stroke-width="1" stroke-dasharray="1,2"/><line x1="1076.5" y1="524" x2="1076.5" y2="1200" stroke="#3c3c3c" stroke-width="1" stroke-dasharray="1,2"/><line x1="1094.5" y1="524" x2="1094.5" y2="1200" stroke="#3c3c3c" stroke-width="1" stroke-dasharray="1,2"/><line x1="1113.5" y1="524" x2="1113.5" y2="1200" stroke="#3c3c3c" stroke-width="1" stroke-dasharray="1,2"/><line x1="1149.5" y1="524" x2="1149.5" y2="1200" stroke="#3c3c3c" stroke-width="1" stroke-dasharray="1,2"/><line x1="1167.5" y1="524" x2="1167.5" y2="1200" stroke="#3c3c3c" stroke-width="1" stroke-dasharray="1,2"/><line x1="1186.5" y1="524" x2="1186.5" y2="1200" stroke="#3c3c3c" stroke-width="1" stroke-dasharray="1,2"/><line x1="1204.5" y1="524" x2="1204.5" y2="1200" stroke="#3c3c3c" stroke-width="1" stroke-dasharray="1,2"/><line x1="1240.5" y1="524" x2="1240.5" y2="1200" stroke="#3c3c3c" stroke-width="1" stroke-dasharray="1,2"/><line x1="280" y1="530.5" x2="1253" y2="530.5" stroke="#3c3c3c" stroke-width="1" stroke-dasharray="1,2"/><line x1="280" y1="549.5" x2="1253" y2="549.5" stroke="#3c3c3c" stroke-width="1" stroke-dasharray="1,2"/><line x1="280" y1="587.5" x2="1253" y2="587.5" stroke="#3c3c3c" stroke-width="1" stroke-dasharray="1,2"/><line x1="280" y1="606.5" x2="1253" y2="606.5" stroke="#3c3c3c" stroke-width="1" stroke-dasharray="1,2"/><line x1="280" y1="626.5" x2="1253" y2="626.5" stroke="#3c3c3c" stroke-width="1" stroke-dasharray="1,2"/><line x1="280" y1="645.5" x2="1253" y2="645.5" stroke="#3c3c3c" stroke-width="1" stroke-dasharray="1,2"/><line x1="280" y1="683.5" x2="1253" y2="683.5" stroke="#3c3c3c" stroke-width="1" stroke-dasharray="1,2"/><line x1="280" y1="703.5" x2="1253" y2="703.5" stroke="#3c3c3c" stroke-width="1" stroke-dasharray="1,2"/><line x1="280" y1="722.5" x2="1253" y2="722.5" stroke="#3c3c3c" stroke-width="1" stroke-dasharray="1,2"/><line x1="280" y1="741.5" x2="1253" y2="741.5" stroke="#3c3c3c" stroke-width="1" stroke-dasharray="1,2"/><line x1="280" y1="779.5" x2="1253" y2="779.5" stroke="#3c3c3c" stroke-width="1" stroke-dasharray="1,2"/><line x1="280" y1="799.5" x2="1253" y2="799.5" stroke="#3c3c3c" stroke-width="1" stroke-dasharray="1,2"/><line x1="280" y1="818.5" x2="1253" y2="818.5" stroke="#3c3c3c" stroke-width="1" stroke-dasharray="1,2"/><line x1="280" y1="837.5" x2="1253" y2="837.5" stroke="#3c3c3c" stroke-width="1" stroke-dasharray="1,2"/><line x1="280" y1="876.5" x2="1253" y2="876.5" stroke="#3c3c3c" stroke-width="1" stroke-dasharray="1,2"/><line x1="280" y1="895.5" x2="1253" y2="895.5" stroke="#3c3c3c" stroke-width="1" stroke-dasharray="1,2"/><line x1="280" y1="914.5" x2="1253" y2="914.5" stroke="#3c3c3c" stroke-width="1" stroke-dasharray="1,2"/><line x1="280" y1="933.5" x2="1253" y2="933.5" stroke="#3c3c3c" stroke-width="1" stroke-dasharray="1,2"/><line x1="280" y1="972.5" x2="1253" y2="972.5" stroke="#3c3c3c" stroke-width="1" stroke-dasharray="1,2"/><line x1="280" y1="991.5" x2="1253" y2="991.5" stroke="#3c3c3c" stroke-width="1" stroke-dasharray="1,2"/><line x1="280" y1="1010.5" x2="1253" y2="1010.5" stroke="#3c3c3c" stroke-width="1" stroke-dasharray="1,2"/><line x1="280" y1="1029.5" x2="1253" y2="1029.5" stroke="#3c3c3c" stroke-width="1" stroke-dasharray="1,2"/><line x1="280" y1="1068.5" x2="1253" y2="1068.5" stroke="#3c3c3c" stroke-width="1" stroke-dasharray="1,2"/><line x1="280" y1="1087.5" x2="1253" y2="1087.5" stroke="#3c3c3c" stroke-width="1" stroke-dasharray="1,2"/><line x1="280" y1="1106.5" x2="1253" y2="1106.5" stroke="#3c3c3c" stroke-width="1" stroke-dasharray="1,2"/><line x1="280" y1="1125.5" x2="1253" y2="1125.5" stroke="#3c3c3c" stroke-width="1" stroke-dasharray="1,2"/><line x1="280" y1="1164.5" x2="1253" y2="1164.5" stroke="#3c3c3c" stroke-width="1" stroke-dasharray="1,2"/><line x1="280" y1="1183.5" x2="1253" y2="1183.5" stroke="#3c3c3c" stroke-width="1" stroke-dasharray="1,2"/><line x1="309.5" y1="524" x2="309.5" y2="1200" stroke="#a0a0a0" stroke-width="1" stroke-dasharray="1,2"/><line x1="400.5" y1="524" x2="400.5" y2="1200" stroke="#a0a0a0" stroke-width="1" stroke-dasharray="1,2"/><line x1="492.5" y1="524" x2="492.5" y2="1200" stroke="#a0a0a0" stroke-width="1" stroke-dasharray="1,2"/><line x1="583.5" y1="524" x2="583.5" y2="1200" stroke="#a0a0a0" stroke-width="1" stroke-dasharray="1,2"/><line x1="674.5" y1="524" x2="674.5" y2="1200" stroke="#a0a0a0" stroke-width="1" stroke-dasharray="1,2"/><line x1="766.5" y1="524" x2="766.5" y2="1200" stroke="#a0a0a0" stroke-width="1" stroke-dasharray="1,2"/><line x1="857.5" y1="524" x2="857.5" y2="1200" stroke="#a0a0a0" stroke-width="1" stroke-dasharray="1,2"/><line x1="948.5" y1="524" x2="948.5" y2="1200" stroke="#a0a0a0" stroke-width="1" stroke-dasharray="1,2"/><line x1="1040.5" y1="524" x2="1040.5" y2="1200" stroke="#a0a0a0" stroke-width="1" stroke-dasharray="1,2"/><line x1="1131.5" y1="524" x2="1131.5" y2="1200" stroke="#a0a0a0" stroke-width="1" stroke-dasharray="1,2"/><line x1="1222.5" y1="524" x2="1222.5" y2="1200" stroke="#a0a0a0" stroke-width="1" stroke-dasharray="1,2"/><line x1="280" y1="568.5" x2="1253" y2="568.5" stroke="#a0a0a0" stroke-width="1" stroke-dasharray="1,2"/><line x1="280" y1="664.5" x2="1253" y2="664.5" stroke="#a0a0a0" stroke-width="1" stroke-dasharray="1,2"/><line x1="280" y1="760.5" x2="1253" y2="760.5" stroke="#a0a0a0" stroke-width="1" stroke-dasharray="1,2"/><line x1="280" y1="856.5" x2="1253" y2="856.5" stroke="#a0a0a0" stroke-width="1" stroke-dasharray="1,2"/><line x1="280" y1="952.5" x2="1253" y2="952.5" stroke="#a0a0a0" stroke-width="1" stroke-dasharray="1,2"/><line x1="280" y1="1049.5" x2="1253" y2="1049.5" stroke="#a0a0a0" stroke-width="1" stroke-dasharray="1,2"/><line x1="280" y1="1145.5" x2="1253" y2="1145.5" stroke="#a0a0a0" stroke-width="1" stroke-dasharray="1,2"/><line x1="279.5" y1="524" x2="279.5" y2="1200" stroke="#f0f0f0" stroke-width="1.6" stroke-dasharray="1.6,1.4"/><line x1="280" y1="1200.5" x2="1253" y2="1200.5" stroke="#f0f0f0" stroke-width="1.6" stroke-dasharray="1.6,1.4"/><polyline points="309.9,833.8 316.5,852.9 323.1,905.8 329.7,980.7 336.3,1060.8 342.9,1128.2 349.5,1167.8 356.1,1171.2 362.7,1141.3 369.3,1083.9 375.9,1008.6 382.5,927.8 389.1,855.1 395.7,802.5 402.3,778.8 408.9,789.7 415.5,837.2 422.1,910.4 428.7,992.6 435.3,1065.0 441.9,1111.0 448.5,1120.0 455.1,1089.7 461.7,1026.0 468.3,941.7 474.9,853.4 481.5,778.8 488.1,732.6 494.7,724.0 501.3,752.3 507.9,810.8 514.5,887.2 521.1,965.9 527.7,1030.3 534.3,1067.2 540.9,1068.8 547.5,1034.0 554.1,969.4 560.7,887.1 567.3,802.9 573.9,732.7 580.5,689.8 587.1,682.5 593.7,713.5 600.3,776.5 606.9,857.8 613.5,939.7 620.1,1004.3 626.7,1037.5 633.3,1032.5 639.9,991.9 646.5,923.4 653.1,840.0 659.7,757.6 666.3,691.9 672.9,655.3 679.5,654.9 686.1,692.0 692.7,758.8 699.3,841.2 705.9,921.5 712.5,982.7 719.1,1011.6 725.7,1002.3 732.3,956.9 738.9,884.4 745.5,799.1 752.1,718.0 758.7,657.1 765.3,628.5 771.9,638.5 778.5,686.4 785.1,761.8 791.7,847.7 798.3,925.0 804.9,976.5 811.5,990.8 818.1,967.1 824.7,911.6 831.3,834.7 837.9,751.0 844.5,676.4 851.1,625.1 857.7,606.9 864.3,625.0 870.9,675.9 877.5,749.3 884.1,830.9 890.7,904.3 897.3,955.2 903.9,973.3 910.5,953.3 917.1,897.3 923.7,817.2 930.3,729.5 936.9,652.6 943.5,602.5 950.1,589.6 956.7,614.9 963.3,672.4 969.9,750.2 976.5,832.7 983.1,903.1 989.7,947.0 996.3,955.5 1002.9,925.2 1009.5,861.8 1016.1,778.5 1022.7,692.6 1029.3,621.9 1035.9,581.1 1042.5,578.3 1049.1,610.8 1055.7,671.9 1062.3,749.9 1068.9,830.0 1075.5,897.1 1082.1,938.3 1088.7,945.6 1095.3,914.5 1101.9,850.3 1108.5,766.2 1115.1,679.7 1121.7,608.9 1128.3,568.3 1134.9,566.3 1141.5,602.1 1148.1,667.9 1154.7,750.1 1161.3,831.7 1167.9,895.6 1174.5,928.7 1181.1,923.6 1187.7,879.6 1194.3,806.0 1200.9,718.5 1207.5,635.7 1214.1,575.4 1220.7,550.2 1221.5,549.9" fill="none" stroke="#2a84d0" stroke-width="1.1" stroke-linejoin="round"/></svg><div class="t" style="left:235.5px;width:800px;text-align:center;top:487.2px;font-size:21px;line-height:21px;color:#ffff00;font-weight:normal;">TRAN Transient Analysis V(OUT) 2026-02-21 23:15</div><div class="t" style="left:215.0px;width:60px;text-align:right;top:562.4px;font-size:12.3px;line-height:12.3px;color:#9a9a9a;font-weight:normal;">390</div><div class="t" style="left:215.0px;width:60px;text-align:right;top:658.5px;font-size:12.3px;line-height:12.3px;color:#9a9a9a;font-weight:normal;">380</div><div class="t" style="left:215.0px;width:60px;text-align:right;top:754.6px;font-size:12.3px;line-height:12.3px;color:#9a9a9a;font-weight:normal;">370</div><div class="t" style="left:215.0px;width:60px;text-align:right;top:850.7px;font-size:12.3px;line-height:12.3px;color:#9a9a9a;font-weight:normal;">360</div><div class="t" style="left:215.0px;width:60px;text-align:right;top:946.8px;font-size:12.3px;line-height:12.3px;color:#9a9a9a;font-weight:normal;">350</div><div class="t" style="left:215.0px;width:60px;text-align:right;top:1042.9px;font-size:12.3px;line-height:12.3px;color:#9a9a9a;font-weight:normal;">340</div><div class="t" style="left:215.0px;width:60px;text-align:right;top:1139.0px;font-size:12.3px;line-height:12.3px;color:#9a9a9a;font-weight:normal;">330</div><div class="t" style="left:289.6px;width:40px;text-align:center;top:1203.1px;font-size:12.3px;line-height:12.3px;color:#9a9a9a;font-weight:normal;">0</div><div class="t" style="left:380.9px;width:40px;text-align:center;top:1203.1px;font-size:12.3px;line-height:12.3px;color:#9a9a9a;font-weight:normal;">1</div><div class="t" style="left:472.2px;width:40px;text-align:center;top:1203.1px;font-size:12.3px;line-height:12.3px;color:#9a9a9a;font-weight:normal;">2</div><div class="t" style="left:563.5px;width:40px;text-align:center;top:1203.1px;font-size:12.3px;line-height:12.3px;color:#9a9a9a;font-weight:normal;">3</div><div class="t" style="left:654.8px;width:40px;text-align:center;top:1203.1px;font-size:12.3px;line-height:12.3px;color:#9a9a9a;font-weight:normal;">4</div><div class="t" style="left:746.1px;width:40px;text-align:center;top:1203.1px;font-size:12.3px;line-height:12.3px;color:#9a9a9a;font-weight:normal;">5</div><div class="t" style="left:837.4px;width:40px;text-align:center;top:1203.1px;font-size:12.3px;line-height:12.3px;color:#9a9a9a;font-weight:normal;">6</div><div class="t" style="left:928.7px;width:40px;text-align:center;top:1203.1px;font-size:12.3px;line-height:12.3px;color:#9a9a9a;font-weight:normal;">7</div><div class="t" style="left:1020.0px;width:40px;text-align:center;top:1203.1px;font-size:12.3px;line-height:12.3px;color:#9a9a9a;font-weight:normal;">8</div><div class="t" style="left:1111.3px;width:40px;text-align:center;top:1203.1px;font-size:12.3px;line-height:12.3px;color:#9a9a9a;font-weight:normal;">9</div><div class="t" style="left:1202.6px;width:40px;text-align:center;top:1203.1px;font-size:12.3px;line-height:12.3px;color:#9a9a9a;font-weight:normal;">10</div><div class="t" style="left:665.0px;width:200px;text-align:center;top:1225.1px;font-size:12.3px;line-height:12.3px;color:#e0e0e0;font-weight:normal;">TIME (x1e-09)</div><div class="t" style="left:188px;top:852px;width:90px;text-align:center;font-size:12.3px;line-height:12.3px;color:#e0e0e0;transform:rotate(-90deg);transform-origin:45px 6px">V(OUT) (x0.001)</div><div class="a" style="left:39px;top:944px;width:20px;height:1px;background:#2f8fd8"></div><div class="t" style="left:68.0px;top:938.1px;font-size:12.3px;line-height:12.3px;color:#a8a8a8;font-weight:normal;">V(OUT)</div><div class="a" style="left:1352px;top:0px;width:1048px;height:730px;background:#efefef;box-shadow:0 4px 22px rgba(0,0,0,.45)"></div><div class="t" style="left:1526.0px;width:700px;text-align:center;top:5.3px;font-size:14.3px;line-height:14.3px;color:#b3b3b3;font-weight:normal;">Revolution EDA SAE(tb_inverter-schematic) (C) Revolution Semiconductor</div><div class="a" style="left:2332px;top:15px;width:10px;height:2px;background:#b8b8b8"></div><div class="a" style="left:2355px;top:8px;width:11px;height:9px;border:2px solid #b8b8b8;border-top-width:2px;box-sizing:border-box"></div><svg class="a" style="left:2377px;top:6px;" width="12" height="12" viewBox="0 0 12 12"><path d="M1,1 L11,11 M11,1 L1,11" stroke="#b8b8b8" stroke-width="1.8"/></svg><div class="t" style="left:1365.2px;top:31.3px;font-size:12.3px;line-height:12.3px;color:#222;font-weight:normal;"><u>S</u>ession</div><div class="t" style="left:1422.5px;top:31.3px;font-size:12.3px;line-height:12.3px;color:#222;font-weight:normal;">S<u>e</u>tup</div><div class="t" style="left:1468.9px;top:31.3px;font-size:12.3px;line-height:12.3px;color:#222;font-weight:normal;"><u>A</u>nalysis</div><div class="t" style="left:1528.9px;top:31.3px;font-size:12.3px;line-height:12.3px;color:#222;font-weight:normal;"><u>V</u>ariables</div><div class="t" style="left:1595.0px;top:31.3px;font-size:12.3px;line-height:12.3px;color:#222;font-weight:normal;"><u>O</u>utputs</div><div class="t" style="left:1655.3px;top:31.3px;font-size:12.3px;line-height:12.3px;color:#222;font-weight:normal;">S<u>i</u>mulation</div><div class="t" style="left:1730.3px;top:31.3px;font-size:12.3px;line-height:12.3px;color:#222;font-weight:normal;"><u>R</u>esults</div><div class="t" style="left:1785.0px;top:31.3px;font-size:12.3px;line-height:12.3px;color:#222;font-weight:normal;"><u>T</u>ools</div><div class="t" style="left:1829.1px;top:31.3px;font-size:12.3px;line-height:12.3px;color:#222;font-weight:normal;"><u>H</u>elp</div><div class="a" style="left:1355px;top:48px;width:1042px;height:1px;background:#d0d0d0"></div><div class="a" style="left:1355px;top:49px;width:1042px;height:46px;background:linear-gradient(#f7f7f7,#efefef)"></div><div class="a" style="left:1355px;top:95px;width:1042px;height:1px;background:#c8c8c8"></div><svg class="a" style="left:1361px;top:64px;" width="4" height="17" viewBox="0 0 4 17"><rect x="0" y="0" width="1" height="1" fill="#bbb"/><rect x="3" y="0" width="1" height="1" fill="#bbb"/><rect x="0" y="3" width="1" height="1" fill="#bbb"/><rect x="3" y="3" width="1" height="1" fill="#bbb"/><rect x="0" y="6" width="1" height="1" fill="#bbb"/><rect x="3" y="6" width="1" height="1" fill="#bbb"/><rect x="0" y="9" width="1" height="1" fill="#bbb"/><rect x="3" y="9" width="1" height="1" fill="#bbb"/><rect x="0" y="12" width="1" height="1" fill="#bbb"/><rect x="3" y="12" width="1" height="1" fill="#bbb"/><rect x="0" y="15" width="1" height="1" fill="#bbb"/><rect x="3" y="15" width="1" height="1" fill="#bbb"/></svg><svg class="a" style="left:1379px;top:64px;overflow:visible" width="17" height="17" viewBox="0 0 17 17"><defs><linearGradient id="g14" x1="0" y1="0" x2="1" y2="1"><stop offset="0" stop-color="#eef6fc"/><stop offset="1" stop-color="#b4d2ee"/></linearGradient></defs><path d="M3.5,0.5 H11.5 L14.5,3.5 V15.5 H3.5 Z" fill="url(#g14)" stroke="#7aa4d4" stroke-width="1" stroke-linejoin="round"/><path d="M11.5,0.5 V3.5 H14.5" fill="#fff" stroke="#7aa4d4" stroke-width=".8"/><path d="M1,7 H4.5 V5 L9,8.5 L4.5,12 V10 H1 Z" fill="#e8f2fa" stroke="#7aa4d4" stroke-width=".9"/></svg><svg class="a" style="left:1422px;top:64px;overflow:visible" width="17" height="17" viewBox="0 0 17 17"><defs><linearGradient id="g15" x1="0" y1="0" x2="1" y2="1"><stop offset="0" stop-color="#eef6fc"/><stop offset="1" stop-color="#b4d2ee"/></linearGradient></defs><path d="M1.5,0.5 H9.5 L12.5,3.5 V15.5 H1.5 Z" fill="url(#g15)" stroke="#7aa4d4" stroke-width="1" stroke-linejoin="round"/><path d="M9.5,0.5 V3.5 H12.5" fill="#fff" stroke="#7aa4d4" stroke-width=".8"/><path d="M6.5,7 H10.5 V5 L15.2,8.5 L10.5,12 V10 H6.5 Z" fill="#e8f2fa" stroke="#7aa4d4" stroke-width=".9"/></svg><svg class="a" style="left:1463px;top:64px;overflow:visible" width="17" height="17" viewBox="0 0 17 17"><defs><linearGradient id="g16" x1="0" y1="0" x2="1" y2="1"><stop offset="0" stop-color="#eef6fc"/><stop offset="1" stop-color="#b4d2ee"/></linearGradient></defs><path d="M1.5,0.5 H9.5 L12.5,3.5 V15.5 H1.5 Z" fill="url(#g16)" stroke="#7aa4d4" stroke-width="1" stroke-linejoin="round"/><path d="M9.5,0.5 V3.5 H12.5" fill="#fff" stroke="#7aa4d4" stroke-width=".8"/><path d="M6.20,15.60 L9.36,14.62 L14.19,10.22 L12.31,8.15 L7.48,12.55 Z" fill="#e8cc3a" stroke="#8a7a30" stroke-width=".6"/><path d="M14.19,10.22 L16.04,8.54 L14.16,6.46 L12.31,8.15 Z" fill="#e05060"/><path d="M6.20,15.60 L7.90,15.09 L6.87,13.95 Z" fill="#222"/></svg><svg class="a" style="left:1510px;top:64px;overflow:visible" width="17" height="17" viewBox="0 0 17 17"><defs><linearGradient id="g17" x1="0" y1="0" x2="1" y2="1"><stop offset="0" stop-color="#eef6fc"/><stop offset="1" stop-color="#b4d2ee"/></linearGradient></defs><path d="M2.5,0.5 H10.5 L13.5,3.5 V15.5 H2.5 Z" fill="url(#g17)" stroke="#7aa4d4" stroke-width="1" stroke-linejoin="round"/><path d="M10.5,0.5 V3.5 H13.5" fill="#fff" stroke="#7aa4d4" stroke-width=".8"/><path d="M5.3,7.5 L8,9.5 L10.8,7 M8,9.5 L10.8,12" stroke="#667" stroke-width=".8" fill="none"/><circle cx="5" cy="7.2" r="1.3" fill="#dde" stroke="#667" stroke-width=".8"/><circle cx="10.9" cy="6.6" r="1.3" fill="#dde" stroke="#667" stroke-width=".8"/><circle cx="10.9" cy="12.2" r="1.3" fill="#dde" stroke="#667" stroke-width=".8"/></svg><svg class="a" style="left:1550px;top:64px;overflow:visible" width="17" height="17" viewBox="0 0 17 17"><path d="M1.8,15 L9.5,7.8" stroke="#d82828" stroke-width="3.2" stroke-linecap="round"/><path d="M9.5,7.8 L15,2.3" stroke="#999" stroke-width="1.5"/><circle cx="15.3" cy="1.7" r="1.2" fill="#eee" stroke="#888" stroke-width=".7"/></svg><svg class="a" style="left:1592px;top:64px;overflow:visible" width="17" height="17" viewBox="0 0 17 17"><rect x="5.5" y="0.5" width="9.5" height="11" rx=".8" fill="#5a94dc" stroke="#2a5aa0" stroke-width=".8"/><rect x="3.3" y="2.4" width="9.5" height="11" rx=".8" fill="#4a84cc" stroke="#2a5aa0" stroke-width=".8"/><rect x="1" y="4.3" width="9.5" height="11.3" rx=".8" fill="#3a74bc" stroke="#1a2a40" stroke-width=".9"/><rect x="3.5" y="7.5" width="4.5" height="5" fill="none" stroke="#6aa0e0" stroke-width=".8"/></svg><svg class="a" style="left:1639px;top:64px;overflow:visible" width="17" height="17" viewBox="0 0 17 17"><rect x="0.8" y="0.5" width="14.5" height="14" rx="1" fill="#d6d6d6" stroke="#777" stroke-width="1"/><rect x="2.2" y="2.2" width="11.6" height="3.8" fill="#8ed08a" stroke="#4a8a4a" stroke-width=".6"/><rect x="2.6" y="8.2" width="1.4" height="1" fill="#666"/><rect x="5.2" y="8.2" width="1.4" height="1" fill="#666"/><rect x="7.8" y="8.2" width="1.4" height="1" fill="#666"/><rect x="10.4" y="8.2" width="1.4" height="1" fill="#666"/><rect x="13.0" y="8.2" width="1.4" height="1" fill="#666"/><rect x="2.6" y="10.4" width="1.4" height="1" fill="#666"/><rect x="5.2" y="10.4" width="1.4" height="1" fill="#666"/><rect x="7.8" y="10.4" width="1.4" height="1" fill="#666"/><rect x="10.4" y="10.4" width="1.4" height="1" fill="#666"/><rect x="13.0" y="10.4" width="1.4" height="1" fill="#666"/><rect x="2.6" y="12.6" width="1.4" height="1" fill="#666"/><rect x="5.2" y="12.6" width="1.4" height="1" fill="#666"/><rect x="7.8" y="12.6" width="1.4" height="1" fill="#666"/><rect x="10.4" y="12.6" width="1.4" height="1" fill="#666"/><rect x="13.0" y="12.6" width="1.4" height="1" fill="#666"/></svg><svg class="a" style="left:1681px;top:64px;overflow:visible" width="17" height="17" viewBox="0 0 17 17"><circle cx="8" cy="7.8" r="5.2" fill="#c8c8c8" stroke="#8a8a8a" stroke-width="2.6" stroke-dasharray="2.2,1.4"/><circle cx="8" cy="7.8" r="4.6" fill="#cfcfcf"/><circle cx="8" cy="7.8" r="2" fill="#fff" stroke="#888" stroke-width=".7"/><path d="M7.40,15.70 L10.50,14.55 L15.04,9.96 L13.05,7.99 L8.51,12.58 Z" fill="#e8cc3a" stroke="#8a7a30" stroke-width=".6"/><path d="M15.04,9.96 L16.80,8.18 L14.80,6.22 L13.05,7.99 Z" fill="#e05060"/><path d="M7.40,15.70 L9.07,15.10 L7.98,14.02 Z" fill="#222"/></svg><svg class="a" style="left:1729px;top:64px;overflow:visible" width="17" height="17" viewBox="0 0 17 17"><rect x="0.5" y="0.5" width="15.5" height="14.2" rx="1" fill="#f2f6f6" stroke="#8a9a9a" stroke-width="1"/><rect x="2" y="2" width="12.5" height="11.2" fill="#fff" stroke="#5ab4f0" stroke-width="1"/><path d="M2,5 H14.5 M2,7.7 H14.5 M2,10.4 H14.5 M5,2 V13.2 M8.3,2 V13.2 M11.5,2 V13.2" stroke="#9ad0f4" stroke-width=".9"/><rect x="2" y="2" width="12.5" height="2.3" fill="#5ab4f0"/></svg><svg class="a" style="left:1769px;top:64px;overflow:visible" width="17" height="17" viewBox="0 0 17 17"><defs><linearGradient id="g18" x1="0" y1="0" x2="1" y2="1"><stop offset="0" stop-color="#ffffff"/><stop offset="1" stop-color="#d2e2e2"/></linearGradient></defs><rect x="2.7" y="0.5" width="11.8" height="15.2" rx="1" fill="url(#g18)" stroke="#7f9a9a" stroke-width="1"/><rect x="4.5" y="2.4" width="8.2" height="2.6" fill="#30b830" stroke="#188a18" stroke-width=".5"/><path d="M1.3,2.2 L3.3,3.7 L1.3,5.2 Z" fill="#30b830"/></svg><svg class="a" style="left:1811px;top:64px;overflow:visible" width="17" height="17" viewBox="0 0 17 17"><defs><linearGradient id="g19" x1="0" y1="0" x2="1" y2="1"><stop offset="0" stop-color="#ffffff"/><stop offset="1" stop-color="#d2e2e2"/></linearGradient></defs><path d="M2.4,0.5 H10.399999999999999 L13.2,3.3 V15.5 H2.4 Z" fill="url(#g19)" stroke="#7f9a9a" stroke-width="1" stroke-linejoin="round"/><path d="M10.399999999999999,0.5 V3.3 H13.2" fill="#fff" stroke="#7f9a9a" stroke-width=".8"/><rect x="6.7" y="11.1" width="8.4" height="2.8" fill="#d83030" stroke="#a01818" stroke-width=".5"/><path d="M4.3,10.9 L6.3,12.5 L4.3,14.1 Z" fill="#c02020"/></svg><svg class="a" style="left:1851px;top:64px;overflow:visible" width="17" height="17" viewBox="0 0 17 17"><defs><linearGradient id="g20" x1="0" y1="0" x2="1" y2="0"><stop offset="0" stop-color="#a8dcfc"/><stop offset="1" stop-color="#2a8ae0"/></linearGradient></defs><path d="M8.2,1 L14.6,7.5 H10.6 V14.7 H5.8 V7.5 H1.9 Z" fill="url(#g20)" stroke="#3a8ad8" stroke-width=".5"/></svg><svg class="a" style="left:1892px;top:64px;overflow:visible" width="17" height="17" viewBox="0 0 17 17"><defs><linearGradient id="g21" x1="0" y1="0" x2="1" y2="0"><stop offset="0" stop-color="#a8dcfc"/><stop offset="1" stop-color="#2a8ae0"/></linearGradient></defs><path d="M8.2,14.7 L14.6,8.2 H10.6 V1 H5.8 V8.2 H1.9 Z" fill="url(#g21)" stroke="#3a8ad8" stroke-width=".5"/></svg><svg class="a" style="left:1941px;top:64px;overflow:visible" width="17" height="17" viewBox="0 0 17 17"><defs><linearGradient id="g22" x1="0" y1="0" x2="1" y2="1"><stop offset="0" stop-color="#ffffff"/><stop offset="1" stop-color="#d2e2e2"/></linearGradient></defs><path d="M2.9,0.5 H11.1 L13.6,3.0 V15.5 H2.9 Z" fill="url(#g22)" stroke="#7f9a9a" stroke-width="1" stroke-linejoin="round"/><path d="M11.1,0.5 V3.0 H13.6" fill="#fff" stroke="#7f9a9a" stroke-width=".8"/><path d="M4,6 L5.5,7.6 L8,4.6 M4,10.3 L5.5,11.9 L8,8.9" stroke="#28a828" stroke-width="1.3" fill="none"/><path d="M9,6.5 H12.5 M9,10.8 H12.5" stroke="#9aa" stroke-width=".8" stroke-dasharray="1,.6"/></svg><svg class="a" style="left:1981px;top:64px;overflow:visible" width="17" height="17" viewBox="0 0 17 17"><rect x="0.8" y="0.5" width="14.8" height="14" rx=".8" fill="#eef0f0" stroke="#8a9a9a" stroke-width="1"/><path d="M4,2.5 V13 M8,2.5 V13 M12,2.5 V13 M2.5,4.5 H14 M2.5,8.5 H14 M2.5,12 H14" stroke="#aab" stroke-width=".6" stroke-dasharray=".8,1"/><path d="M3.00,12.50 L6.08,11.39 L10.47,7.26 L8.69,5.37 L4.29,9.50 Z" fill="#e8cc3a" stroke="#8a7a30" stroke-width=".6"/><path d="M10.47,7.26 L12.29,5.55 L10.51,3.65 L8.69,5.37 Z" fill="#e05060"/><path d="M3.00,12.50 L4.66,11.92 L3.68,10.88 Z" fill="#222"/></svg><svg class="a" style="left:2023px;top:64px;overflow:visible" width="17" height="17" viewBox="0 0 17 17"><path d="M1.2,1.5 Q1.2,0.9 1.8,0.9 H13.6 L14.8,2.1 V14.1 Q14.8,14.7 14.2,14.7 H1.8 Q1.2,14.7 1.2,14.1 Z" fill="#a650bc" stroke="#7a2a90" stroke-width=".7"/><rect x="3" y="1.6" width="10" height="5.8" fill="#e8f0f4"/><rect x="4.3" y="9.6" width="7.6" height="5.1" fill="#c8c8d0" stroke="#7a2a90" stroke-width=".5"/><rect x="5.6" y="10.6" width="2" height="3.5" fill="#7a6a80"/></svg><svg class="a" style="left:2071px;top:64px;overflow:visible" width="17" height="17" viewBox="0 0 17 17"><defs><linearGradient id="g23" x1="0" y1="0" x2="1" y2="0"><stop offset="0" stop-color="#a8dcfc"/><stop offset="1" stop-color="#2a8ae0"/></linearGradient></defs><path d="M2.2,1.8 L8.3,7.4 L2.2,13 Z M8.4,1.8 L14.5,7.4 L8.4,13 Z" fill="url(#g23)" stroke="#2a7ad0" stroke-width=".6"/></svg><svg class="a" style="left:2111px;top:64px;overflow:visible" width="17" height="17" viewBox="0 0 17 17"><defs><linearGradient id="g24" x1="0" y1="0" x2="1" y2="0"><stop offset="0" stop-color="#a8dcfc"/><stop offset="1" stop-color="#2a8ae0"/></linearGradient></defs><path d="M4.6,1.3 L11.5,7.45 L4.6,13.6 Z" fill="url(#g24)" stroke="#2a7ad0" stroke-width=".6"/></svg><svg class="a" style="left:2152px;top:64px;overflow:visible" width="17" height="17" viewBox="0 0 17 17"><defs><linearGradient id="g25" x1="0" y1="0" x2="0" y2="1"><stop offset="0" stop-color="#7ac8fa"/><stop offset="1" stop-color="#1a78d8"/></linearGradient></defs><rect x="2.7" y="2.1" width="10.6" height="10.7" rx="1" fill="url(#g25)" stroke="#2a6ac0" stroke-width=".6"/></svg><svg class="a" style="left:2194px;top:64px;overflow:visible" width="17" height="17" viewBox="0 0 17 17"><rect x="1.3" y="1.1" width="5.7" height="5.5" rx=".8" fill="#e6e6e6" stroke="#888" stroke-width=".8"/><path d="M2.5,3.8 L3.8,5.2 L6,2.3" stroke="#555" stroke-width="1" fill="none"/><rect x="1.3" y="9.2" width="5.7" height="5.5" rx=".8" fill="#f4f4f4" stroke="#888" stroke-width=".8"/><path d="M8.3,4.4 H15.3 M8.3,12.3 H15.3" stroke="#222" stroke-width="1.1" stroke-dasharray="1.4,.5"/></svg><svg class="a" style="left:2235px;top:64px;overflow:visible" width="17" height="17" viewBox="0 0 17 17"><path d="M0.2,15.3 L2.2,12.2 L12.8,1.6 Q14,0.6 15,1.5 Q15.8,2.5 14.8,3.6 L4.2,14.2 Z" fill="#e4e020" stroke="#9a9a20" stroke-width=".6"/><path d="M0.2,15.3 L2.2,12.2 L4.2,14.2 Z" fill="#ddd"/><path d="M1.5,13 L5.5,9" stroke="#444" stroke-width="2.6"/><path d="M9.010000000000002,12.3 H15.79 M12.4,8.91 V15.690000000000001" stroke="#148a14" stroke-width="3.16" stroke-linecap="butt"/><path d="M9.510000000000002,12.3 H15.29 M12.4,9.41 V15.190000000000001" stroke="#2fb52f" stroke-width="2.16" stroke-linecap="butt"/></svg><svg class="a" style="left:2276px;top:64px;overflow:visible" width="17" height="17" viewBox="0 0 17 17"><path d="M0.2,15.3 L2.2,12.2 L12.8,1.6 Q14,0.6 15,1.5 Q15.8,2.5 14.8,3.6 L4.2,14.2 Z" fill="#e4e020" stroke="#9a9a20" stroke-width=".6"/><path d="M0.2,15.3 L2.2,12.2 L4.2,14.2 Z" fill="#ddd"/><path d="M1.5,13 L5.5,9" stroke="#444" stroke-width="2.6"/><path d="M11.15,6.6 L15.5,15.3 H6.8 Z" fill="#f0dc40" stroke="#9a8a20" stroke-width=".7"/><path d="M11.15,9.3 V12.2 M11.15,13.2 V14.3" stroke="#222" stroke-width="1.2"/></svg><svg class="a" style="left:2324px;top:64px;overflow:visible" width="17" height="17" viewBox="0 0 17 17"><path d="M5.7,0.6 H15.3 Q15.9,0.8 15.2,1.8 V11.8 Q15,12.7 14,12.7 H5.2 Q5.6,12 5.7,11 Z" fill="#e4eeee" stroke="#7a9a9a" stroke-width=".8"/><path d="M1.2,3.6 H10.6 Q11.2,3.8 10.5,4.8 V14.8 Q10.3,15.6 9.3,15.6 H0.4 Q1,15 1.2,14 Z" fill="#e4eeee" stroke="#7a9a9a" stroke-width=".8"/><path d="M2.5,6.5 H5 M2.5,9 H8 M2.5,11.5 H6" stroke="#9ab" stroke-width=".8" stroke-dasharray="1,.5"/></svg><svg class="a" style="left:2365px;top:64px;overflow:visible" width="17" height="17" viewBox="0 0 17 17"><path d="M2.2,0.6 H15 Q15.6,0.8 14.9,1.8 V14.8 Q14.7,15.6 13.7,15.6 H1.1 Q1.7,15 2,14 Z" fill="#e4eeee" stroke="#7a9a9a" stroke-width=".8"/><path d="M3.8,4 H7 M3.8,6.5 H13 M3.8,9 H12 M3.8,11.5 H8" stroke="#9ab" stroke-width=".8" stroke-dasharray="1,.5"/></svg><div class="a" style="left:1495px;top:59px;width:1px;height:27px;background:#d8d8d8"></div><div class="a" style="left:1625px;top:59px;width:1px;height:27px;background:#d8d8d8"></div><div class="a" style="left:1714px;top:59px;width:1px;height:27px;background:#d8d8d8"></div><div class="a" style="left:1926px;top:59px;width:1px;height:27px;background:#d8d8d8"></div><div class="a" style="left:2056px;top:59px;width:1px;height:27px;background:#d8d8d8"></div><div class="a" style="left:2308px;top:59px;width:1px;height:27px;background:#d8d8d8"></div><div class="a" style="left:1355px;top:96px;width:1042px;height:31px;background:linear-gradient(#f5f5f5,#efefef)"></div><div class="a" style="left:1355px;top:127px;width:1042px;height:1px;background:#c8c8c8"></div><svg class="a" style="left:1361px;top:104px;" width="4" height="17" viewBox="0 0 4 17"><rect x="0" y="0" width="1" height="1" fill="#bbb"/><rect x="3" y="0" width="1" height="1" fill="#bbb"/><rect x="0" y="3" width="1" height="1" fill="#bbb"/><rect x="3" y="3" width="1" height="1" fill="#bbb"/><rect x="0" y="6" width="1" height="1" fill="#bbb"/><rect x="3" y="6" width="1" height="1" fill="#bbb"/><rect x="0" y="9" width="1" height="1" fill="#bbb"/><rect x="3" y="9" width="1" height="1" fill="#bbb"/><rect x="0" y="12" width="1" height="1" fill="#bbb"/><rect x="3" y="12" width="1" height="1" fill="#bbb"/><rect x="0" y="15" width="1" height="1" fill="#bbb"/><rect x="3" y="15" width="1" height="1" fill="#bbb"/></svg><div class="t" style="left:1368.0px;top:106.6px;font-size:12.3px;line-height:12.3px;color:#111;font-weight:bold;">Temp:</div><div class="a" style="left:1408px;top:100px;width:90px;height:25px;background:#fff;border:1px solid #bdbdbd;border-radius:3px;box-sizing:border-box"></div><div class="t" style="left:1411.0px;top:106.6px;font-size:12.3px;line-height:12.3px;color:#222;font-weight:normal;">27</div><div class="a" style="left:1499px;top:100px;width:70px;height:25px;background:linear-gradient(#f8f8f8,#ececec);border:1px solid #c0c0c0;border-radius:3px;box-sizing:border-box"></div><div class="t" style="left:1504.4px;top:106.6px;font-size:12.3px;line-height:12.3px;color:#222;font-weight:normal;">Celsius</div><svg class="a" style="left:1552px;top:109px;" width="10" height="6" viewBox="0 0 10 6"><path d="M0,0 h10 l-5,6z" fill="#555"/></svg><div class="t" style="left:2191.3px;width:200px;text-align:right;top:106.8px;font-size:11.6px;line-height:11.6px;color:#222;font-weight:normal;">RevEDA SAE: Ready</div><div class="t" style="left:1364.0px;top:141.6px;font-size:12.3px;line-height:12.3px;color:#222;font-weight:normal;">Analyses</div><div class="a" style="left:1365px;top:158px;width:501px;height:245px;background:#ebebeb;border:1px solid #d9d9d9;border-radius:3px;box-sizing:border-box"></div><div class="a" style="left:1376px;top:170px;width:478px;height:221px;background:#fff;border:1px solid #b8b8b8;box-sizing:border-box"></div><div class="a" style="left:1377px;top:191px;width:11px;height:199px;background:#efefef"></div><div class="a" style="left:1377px;top:171px;width:11px;height:21px;background:linear-gradient(#fbfbfb,#ededed);border-right:1px solid #c8c8c8;border-bottom:1px solid #c0c0c0;box-sizing:border-box"></div><div class="t" style="left:1357.0px;width:51px;text-align:center;top:175.9px;font-size:12.3px;line-height:12.3px;color:#222;font-weight:normal;"></div><div class="a" style="left:1388px;top:171px;width:100px;height:21px;background:linear-gradient(#fbfbfb,#ededed);border-right:1px solid #c8c8c8;border-bottom:1px solid #c0c0c0;box-sizing:border-box"></div><div class="t" style="left:1368.0px;width:140px;text-align:center;top:175.9px;font-size:12.3px;line-height:12.3px;color:#222;font-weight:normal;">Name</div><div class="a" style="left:1488px;top:171px;width:365px;height:21px;background:linear-gradient(#fbfbfb,#ededed);border-right:1px solid #c8c8c8;border-bottom:1px solid #c0c0c0;box-sizing:border-box"></div><div class="t" style="left:1468.0px;width:405px;text-align:center;top:175.9px;font-size:12.3px;line-height:12.3px;color:#222;font-weight:normal;">Arguments</div><div class="a" style="left:1377px;top:192px;width:476px;height:30px;background:#fff;border-bottom:1px solid #d6d6d6;box-sizing:border-box"></div><div class="a" style="left:1377px;top:222px;width:476px;height:30px;background:#f6f6f6;border-bottom:1px solid #d6d6d6;box-sizing:border-box"></div><div class="a" style="left:1377px;top:192px;width:11px;height:60px;background:linear-gradient(90deg,#f0f0f0,#e8e8e8)"></div><div class="a" style="left:1387px;top:192px;width:1px;height:60px;background:#c8c8c8"></div><div class="a" style="left:1377px;top:221px;width:11px;height:1px;background:#c8c8c8"></div><div class="a" style="left:1377px;top:251px;width:11px;height:1px;background:#c8c8c8"></div><div class="a" style="left:1487px;top:192px;width:1px;height:60px;background:#d6d6d6"></div><div class="t" style="left:1379.4px;top:201.1px;font-size:12.3px;line-height:12.3px;color:#222;font-weight:normal;">1</div><div class="t" style="left:1379.4px;top:231.1px;font-size:12.3px;line-height:12.3px;color:#222;font-weight:normal;">2</div><div class="t" style="left:1390.9px;top:200.6px;font-size:12.3px;line-height:12.3px;color:#222;font-weight:normal;">TRAN</div><div class="t" style="left:1390.9px;top:230.6px;font-size:12.3px;line-height:12.3px;color:#222;font-weight:normal;">DC</div><div class="t" style="left:1491.2px;top:200.8px;font-size:12.1px;line-height:12.1px;color:#222;font-weight:normal;">tInitStep=10p, tstop=10n, tstart=0, tMaxStep=, tSchedule=, ...</div><div class="t" style="left:1491.2px;top:230.8px;font-size:12.1px;line-height:12.1px;color:#222;font-weight:normal;">sweepType=0, input=VI6, linlog=0, start=0, stop=1.8, step=10m</div><div class="t" style="left:1364.1px;top:426.4px;font-size:12.3px;line-height:12.3px;color:#222;font-weight:normal;">Simulation Variables</div><div class="a" style="left:1365px;top:443px;width:501px;height:274px;background:#ebebeb;border:1px solid #d9d9d9;border-radius:3px;box-sizing:border-box"></div><div class="a" style="left:1376px;top:455px;width:478px;height:192px;background:#fff;border:1px solid #b8b8b8;box-sizing:border-box"></div><div class="a" style="left:1377px;top:456px;width:111px;height:21px;background:linear-gradient(#fbfbfb,#ededed);border-right:1px solid #c8c8c8;border-bottom:1px solid #c0c0c0;box-sizing:border-box"></div><div class="t" style="left:1357.0px;width:151px;text-align:center;top:460.9px;font-size:12.3px;line-height:12.3px;color:#222;font-weight:normal;">Variable Name</div><div class="a" style="left:1488px;top:456px;width:365px;height:21px;background:linear-gradient(#fbfbfb,#ededed);border-right:1px solid #c8c8c8;border-bottom:1px solid #c0c0c0;box-sizing:border-box"></div><div class="t" style="left:1468.0px;width:405px;text-align:center;top:460.9px;font-size:12.3px;line-height:12.3px;color:#222;font-weight:normal;">Value</div><div class="a" style="left:1378px;top:477px;width:110px;height:26px;background:#fff;border:2px solid #b4b4b4;border-radius:2px;box-sizing:border-box"></div><div class="a" style="left:1488px;top:477px;width:364px;height:26px;background:#fff;border:2px solid #b4b4b4;border-radius:2px;box-sizing:border-box"></div><div class="t" style="left:1382.0px;top:483.7px;font-size:12.3px;line-height:12.3px;color:#222;font-weight:normal;">vdd</div><div class="t" style="left:1491.7px;top:483.7px;font-size:12.3px;line-height:12.3px;color:#222;font-weight:normal;">1.8</div><div class="a" style="left:1378px;top:503px;width:110px;height:26px;background:#fff;border:2px solid #b4b4b4;border-radius:2px;box-sizing:border-box"></div><div class="a" style="left:1488px;top:503px;width:364px;height:26px;background:#fff;border:2px solid #b4b4b4;border-radius:2px;box-sizing:border-box"></div><div class="t" style="left:1382.0px;top:509.7px;font-size:12.3px;line-height:12.3px;color:#222;font-weight:normal;">vamp</div><div class="t" style="left:1491.7px;top:509.7px;font-size:12.3px;line-height:12.3px;color:#222;font-weight:normal;">100m</div><div class="a" style="left:1378px;top:529px;width:110px;height:26px;background:#fff;border:2px solid #b4b4b4;border-radius:2px;box-sizing:border-box"></div><div class="a" style="left:1488px;top:529px;width:364px;height:26px;background:#fff;border:2px solid #b4b4b4;border-radius:2px;box-sizing:border-box"></div><div class="t" style="left:1382.0px;top:535.7px;font-size:12.3px;line-height:12.3px;color:#222;font-weight:normal;">freq</div><div class="t" style="left:1491.7px;top:535.7px;font-size:12.3px;line-height:12.3px;color:#222;font-weight:normal;">1G</div><svg class="a" style="left:1388px;top:678px;overflow:visible" width="17" height="17" viewBox="0 0 17 17"><defs><linearGradient id="g26" x1="0" y1="0" x2="1" y2="1"><stop offset="0" stop-color="#ffffff"/><stop offset="1" stop-color="#d2e2e2"/></linearGradient></defs><rect x="2.7" y="0.5" width="11.8" height="15.2" rx="1" fill="url(#g26)" stroke="#7f9a9a" stroke-width="1"/><rect x="4.5" y="2.4" width="8.2" height="2.6" fill="#30b830" stroke="#188a18" stroke-width=".5"/><path d="M1.3,2.2 L3.3,3.7 L1.3,5.2 Z" fill="#30b830"/></svg><svg class="a" style="left:1421px;top:678px;overflow:visible" width="17" height="17" viewBox="0 0 17 17"><defs><linearGradient id="g27" x1="0" y1="0" x2="1" y2="1"><stop offset="0" stop-color="#ffffff"/><stop offset="1" stop-color="#d2e2e2"/></linearGradient></defs><path d="M2.4,0.5 H10.399999999999999 L13.2,3.3 V15.5 H2.4 Z" fill="url(#g27)" stroke="#7f9a9a" stroke-width="1" stroke-linejoin="round"/><path d="M10.399999999999999,0.5 V3.3 H13.2" fill="#fff" stroke="#7f9a9a" stroke-width=".8"/><rect x="6.7" y="11.1" width="8.4" height="2.8" fill="#d83030" stroke="#a01818" stroke-width=".5"/><path d="M4.3,10.9 L6.3,12.5 L4.3,14.1 Z" fill="#c02020"/></svg><svg class="a" style="left:1453px;top:678px;overflow:visible" width="17" height="17" viewBox="0 0 17 17"><defs><linearGradient id="g28" x1="0" y1="0" x2="1" y2="0"><stop offset="0" stop-color="#a8dcfc"/><stop offset="1" stop-color="#2a8ae0"/></linearGradient></defs><path d="M8.2,1 L14.6,7.5 H10.6 V14.7 H5.8 V7.5 H1.9 Z" fill="url(#g28)" stroke="#3a8ad8" stroke-width=".5"/></svg><svg class="a" style="left:1486px;top:678px;overflow:visible" width="17" height="17" viewBox="0 0 17 17"><defs><linearGradient id="g29" x1="0" y1="0" x2="1" y2="0"><stop offset="0" stop-color="#a8dcfc"/><stop offset="1" stop-color="#2a8ae0"/></linearGradient></defs><path d="M8.2,14.7 L14.6,8.2 H10.6 V1 H5.8 V8.2 H1.9 Z" fill="url(#g29)" stroke="#3a8ad8" stroke-width=".5"/></svg><div class="t" style="left:1886.2px;top:141.3px;font-size:12.3px;line-height:12.3px;color:#222;font-weight:normal;">Outputs</div><div class="a" style="left:1887px;top:158px;width:501px;height:559px;background:#ebebeb;border:1px solid #d9d9d9;border-radius:3px;box-sizing:border-box"></div><svg class="a" style="left:1910px;top:181px;overflow:visible" width="17" height="17" viewBox="0 0 17 17"><defs><linearGradient id="g30" x1="0" y1="0" x2="1" y2="1"><stop offset="0" stop-color="#ffffff"/><stop offset="1" stop-color="#d2e2e2"/></linearGradient></defs><rect x="2.7" y="0.5" width="11.8" height="15.2" rx="1" fill="url(#g30)" stroke="#7f9a9a" stroke-width="1"/><rect x="4.5" y="2.4" width="8.2" height="2.6" fill="#30b830" stroke="#188a18" stroke-width=".5"/><path d="M1.3,2.2 L3.3,3.7 L1.3,5.2 Z" fill="#30b830"/></svg><svg class="a" style="left:1943px;top:181px;overflow:visible" width="17" height="17" viewBox="0 0 17 17"><defs><linearGradient id="g31" x1="0" y1="0" x2="1" y2="1"><stop offset="0" stop-color="#ffffff"/><stop offset="1" stop-color="#d2e2e2"/></linearGradient></defs><path d="M2.4,0.5 H10.399999999999999 L13.2,3.3 V15.5 H2.4 Z" fill="url(#g31)" stroke="#7f9a9a" stroke-width="1" stroke-linejoin="round"/><path d="M10.399999999999999,0.5 V3.3 H13.2" fill="#fff" stroke="#7f9a9a" stroke-width=".8"/><rect x="6.7" y="11.1" width="8.4" height="2.8" fill="#d83030" stroke="#a01818" stroke-width=".5"/><path d="M4.3,10.9 L6.3,12.5 L4.3,14.1 Z" fill="#c02020"/></svg><svg class="a" style="left:1976px;top:181px;overflow:visible" width="17" height="17" viewBox="0 0 17 17"><defs><linearGradient id="g32" x1="0" y1="0" x2="1" y2="1"><stop offset="0" stop-color="#ffffff"/><stop offset="1" stop-color="#d2e2e2"/></linearGradient></defs><path d="M2.5,0.5 H10.7 L13.5,3.3 V15.5 H2.5 Z" fill="url(#g32)" stroke="#7f9a9a" stroke-width="1" stroke-linejoin="round"/><path d="M10.7,0.5 V3.3 H13.5" fill="#fff" stroke="#7f9a9a" stroke-width=".8"/><rect x="3.8" y="2.2" width="7.5" height="2.2" fill="#3a6ae0" stroke="#2a4ab0" stroke-width=".4"/></svg><div class="a" style="left:1898px;top:209px;width:478px;height:497px;background:#fff;border:1px solid #b8b8b8;box-sizing:border-box"></div><div class="a" style="left:1899px;top:210px;width:41px;height:21px;background:linear-gradient(#fbfbfb,#ededed);border-right:1px solid #c8c8c8;border-bottom:1px solid #c0c0c0;box-sizing:border-box"></div><div class="t" style="left:1879.0px;width:81px;text-align:center;top:214.9px;font-size:12.3px;line-height:12.3px;color:#222;font-weight:normal;">Name</div><div class="a" style="left:1940px;top:210px;width:82px;height:21px;background:linear-gradient(#fbfbfb,#ededed);border-right:1px solid #c8c8c8;border-bottom:1px solid #c0c0c0;box-sizing:border-box"></div><div class="t" style="left:1920.0px;width:122px;text-align:center;top:214.9px;font-size:12.3px;line-height:12.3px;color:#222;font-weight:normal;">Expression</div><div class="a" style="left:2022px;top:210px;width:38px;height:21px;background:linear-gradient(#fbfbfb,#ededed);border-right:1px solid #c8c8c8;border-bottom:1px solid #c0c0c0;box-sizing:border-box"></div><div class="t" style="left:2002.0px;width:78px;text-align:center;top:214.9px;font-size:12.3px;line-height:12.3px;color:#222;font-weight:normal;">Value</div><div class="a" style="left:2060px;top:210px;width:38px;height:21px;background:linear-gradient(#fbfbfb,#ededed);border-right:1px solid #c8c8c8;border-bottom:1px solid #c0c0c0;box-sizing:border-box"></div><div class="t" style="left:2040.0px;width:78px;text-align:center;top:214.9px;font-size:12.3px;line-height:12.3px;color:#222;font-weight:normal;">Plot</div><div class="a" style="left:2098px;top:210px;width:38px;height:21px;background:linear-gradient(#fbfbfb,#ededed);border-right:1px solid #c8c8c8;border-bottom:1px solid #c0c0c0;box-sizing:border-box"></div><div class="t" style="left:2078.0px;width:78px;text-align:center;top:214.9px;font-size:12.3px;line-height:12.3px;color:#222;font-weight:normal;">Save</div><div class="a" style="left:2136px;top:210px;width:38px;height:21px;background:linear-gradient(#fbfbfb,#ededed);border-right:1px solid #c8c8c8;border-bottom:1px solid #c0c0c0;box-sizing:border-box"></div><div class="t" style="left:2116.0px;width:78px;text-align:center;top:214.9px;font-size:12.3px;line-height:12.3px;color:#222;font-weight:normal;">Spec</div><div class="a" style="left:2174px;top:210px;width:201px;height:21px;background:linear-gradient(#fbfbfb,#ededed);border-right:1px solid #c8c8c8;border-bottom:1px solid #c0c0c0;box-sizing:border-box"></div><div class="t" style="left:2154.0px;width:241px;text-align:center;top:214.9px;font-size:12.3px;line-height:12.3px;color:#222;font-weight:normal;">Analyses</div><div class="a" style="left:1899px;top:260px;width:476px;height:1px;background:#d6d6d6"></div><div class="t" style="left:1944.0px;top:239.6px;font-size:12.3px;line-height:12.3px;color:#222;font-weight:normal;">V(OUT)</div><div class="t" style="left:2026.2px;top:239.6px;font-size:12.3px;line-height:12.3px;color:#222;font-weight:normal;">wave</div><div class="t" style="left:2178.3px;top:239.6px;font-size:12.3px;line-height:12.3px;color:#222;font-weight:normal;">TRAN</div><svg class="a" style="left:2065px;top:238px;" width="14" height="14" viewBox="0 0 14 14"><rect x=".5" y=".5" width="13" height="13" fill="#fff" stroke="#b0b0b0"/><path d="M3.5,7 l2.5,3.5 l5,-8" stroke="#111" stroke-width="1.9" fill="none"/></svg><svg class="a" style="left:2103px;top:238px;" width="14" height="14" viewBox="0 0 14 14"><rect x=".5" y=".5" width="13" height="13" fill="#fff" stroke="#b0b0b0"/><path d="M3.5,7 l2.5,3.5 l5,-8" stroke="#111" stroke-width="1.9" fill="none"/></svg><div class="a" style="left:1899px;top:290px;width:476px;height:1px;background:#d6d6d6"></div><div class="t" style="left:1944.0px;top:269.6px;font-size:12.3px;line-height:12.3px;color:#222;font-weight:normal;">max(V(OUT))</div><div class="t" style="left:2026.2px;top:269.6px;font-size:12.3px;line-height:12.3px;color:#222;font-weight:normal;">1.8</div><div class="t" style="left:2178.3px;top:269.6px;font-size:12.3px;line-height:12.3px;color:#222;font-weight:normal;">DC</div><svg class="a" style="left:2065px;top:268px;" width="14" height="14" viewBox="0 0 14 14"><rect x=".5" y=".5" width="13" height="13" fill="#fff" stroke="#b0b0b0"/><path d="M3.5,7 l2.5,3.5 l5,-8" stroke="#111" stroke-width="1.9" fill="none"/></svg><svg class="a" style="left:2103px;top:268px;" width="14" height="14" viewBox="0 0 14 14"><rect x=".5" y=".5" width="13" height="13" fill="#fff" stroke="#b0b0b0"/><path d="M3.5,7 l2.5,3.5 l5,-8" stroke="#111" stroke-width="1.9" fill="none"/></svg><div class="a" style="left:1899px;top:320px;width:476px;height:1px;background:#d6d6d6"></div><div class="t" style="left:1944.0px;top:299.6px;font-size:12.3px;line-height:12.3px;color:#222;font-weight:normal;">V(OUT)</div><div class="t" style="left:2026.2px;top:299.6px;font-size:12.3px;line-height:12.3px;color:#222;font-weight:normal;"></div><div class="t" style="left:2178.3px;top:299.6px;font-size:12.3px;line-height:12.3px;color:#222;font-weight:normal;">DC</div><svg class="a" style="left:2065px;top:298px;" width="14" height="14" viewBox="0 0 14 14"><rect x=".5" y=".5" width="13" height="13" fill="#fff" stroke="#b0b0b0"/><path d="M3.5,7 l2.5,3.5 l5,-8" stroke="#111" stroke-width="1.9" fill="none"/></svg><svg class="a" style="left:2103px;top:298px;" width="14" height="14" viewBox="0 0 14 14"><rect x=".5" y=".5" width="13" height="13" fill="#fff" stroke="#b0b0b0"/><path d="M3.5,7 l2.5,3.5 l5,-8" stroke="#111" stroke-width="1.9" fill="none"/></svg><div class="a" style="left:1899px;top:350px;width:476px;height:1px;background:#d6d6d6"></div><div class="t" style="left:1944.0px;top:329.6px;font-size:12.3px;line-height:12.3px;color:#222;font-weight:normal;">deriv(V(OUT))</div><div class="t" style="left:2026.2px;top:329.6px;font-size:12.3px;line-height:12.3px;color:#222;font-weight:normal;"></div><div class="t" style="left:2178.3px;top:329.6px;font-size:12.3px;line-height:12.3px;color:#222;font-weight:normal;">DC</div><svg class="a" style="left:2065px;top:328px;" width="14" height="14" viewBox="0 0 14 14"><rect x=".5" y=".5" width="13" height="13" fill="#fff" stroke="#b0b0b0"/><path d="M3.5,7 l2.5,3.5 l5,-8" stroke="#111" stroke-width="1.9" fill="none"/></svg><svg class="a" style="left:2103px;top:328px;" width="14" height="14" viewBox="0 0 14 14"><rect x=".5" y=".5" width="13" height="13" fill="#fff" stroke="#b0b0b0"/><path d="M3.5,7 l2.5,3.5 l5,-8" stroke="#111" stroke-width="1.9" fill="none"/></svg><div class="a" style="left:1899px;top:380px;width:476px;height:1px;background:#d6d6d6"></div><div class="t" style="left:1944.0px;top:359.6px;font-size:12.3px;line-height:12.3px;color:#222;font-weight:normal;">V(NET0)</div><div class="t" style="left:2026.2px;top:359.6px;font-size:12.3px;line-height:12.3px;color:#222;font-weight:normal;"></div><div class="t" style="left:2178.3px;top:359.6px;font-size:12.3px;line-height:12.3px;color:#222;font-weight:normal;">TRAN</div><svg class="a" style="left:2065px;top:358px;" width="14" height="14" viewBox="0 0 14 14"><rect x=".5" y=".5" width="13" height="13" fill="#fff" stroke="#b0b0b0"/><path d="M3.5,7 l2.5,3.5 l5,-8" stroke="#111" stroke-width="1.9" fill="none"/></svg><svg class="a" style="left:2103px;top:358px;" width="14" height="14" viewBox="0 0 14 14"><rect x=".5" y=".5" width="13" height="13" fill="#fff" stroke="#b0b0b0"/><path d="M3.5,7 l2.5,3.5 l5,-8" stroke="#111" stroke-width="1.9" fill="none"/></svg><div class="a" style="left:1899px;top:410px;width:476px;height:1px;background:#d6d6d6"></div><div class="t" style="left:1944.0px;top:389.6px;font-size:12.3px;line-height:12.3px;color:#222;font-weight:normal;">V(NET0)</div><div class="t" style="left:2026.2px;top:389.6px;font-size:12.3px;line-height:12.3px;color:#222;font-weight:normal;"></div><div class="t" style="left:2178.3px;top:389.6px;font-size:12.3px;line-height:12.3px;color:#222;font-weight:normal;">DC</div><svg class="a" style="left:2065px;top:388px;" width="14" height="14" viewBox="0 0 14 14"><rect x=".5" y=".5" width="13" height="13" fill="#fff" stroke="#b0b0b0"/><path d="M3.5,7 l2.5,3.5 l5,-8" stroke="#111" stroke-width="1.9" fill="none"/></svg><svg class="a" style="left:2103px;top:388px;" width="14" height="14" viewBox="0 0 14 14"><rect x=".5" y=".5" width="13" height="13" fill="#fff" stroke="#b0b0b0"/><path d="M3.5,7 l2.5,3.5 l5,-8" stroke="#111" stroke-width="1.9" fill="none"/></svg><div class="a" style="left:1940px;top:231px;width:1px;height:180px;background:#d6d6d6"></div><div class="a" style="left:2022px;top:231px;width:1px;height:180px;background:#d6d6d6"></div><div class="a" style="left:2060px;top:231px;width:1px;height:180px;background:#d6d6d6"></div><div class="a" style="left:2098px;top:231px;width:1px;height:180px;background:#d6d6d6"></div><div class="a" style="left:2136px;top:231px;width:1px;height:180px;background:#d6d6d6"></div><div class="a" style="left:2174px;top:231px;width:1px;height:180px;background:#d6d6d6"></div><div class="a" style="left:1899px;top:231px;width:2px;height:180px;background:#cfcfcf"></div><div class="a" style="left:-4px;top:1px;width:66px;height:21px;background:#dcdcdc;border:1px solid #c4c4c4;border-radius:3px;box-sizing:border-box"></div><div class="t" style="left:-5.2px;top:5.4px;font-size:12.5px;line-height:12.5px;color:#222;font-weight:normal;">GB Volume</div></body></html>
